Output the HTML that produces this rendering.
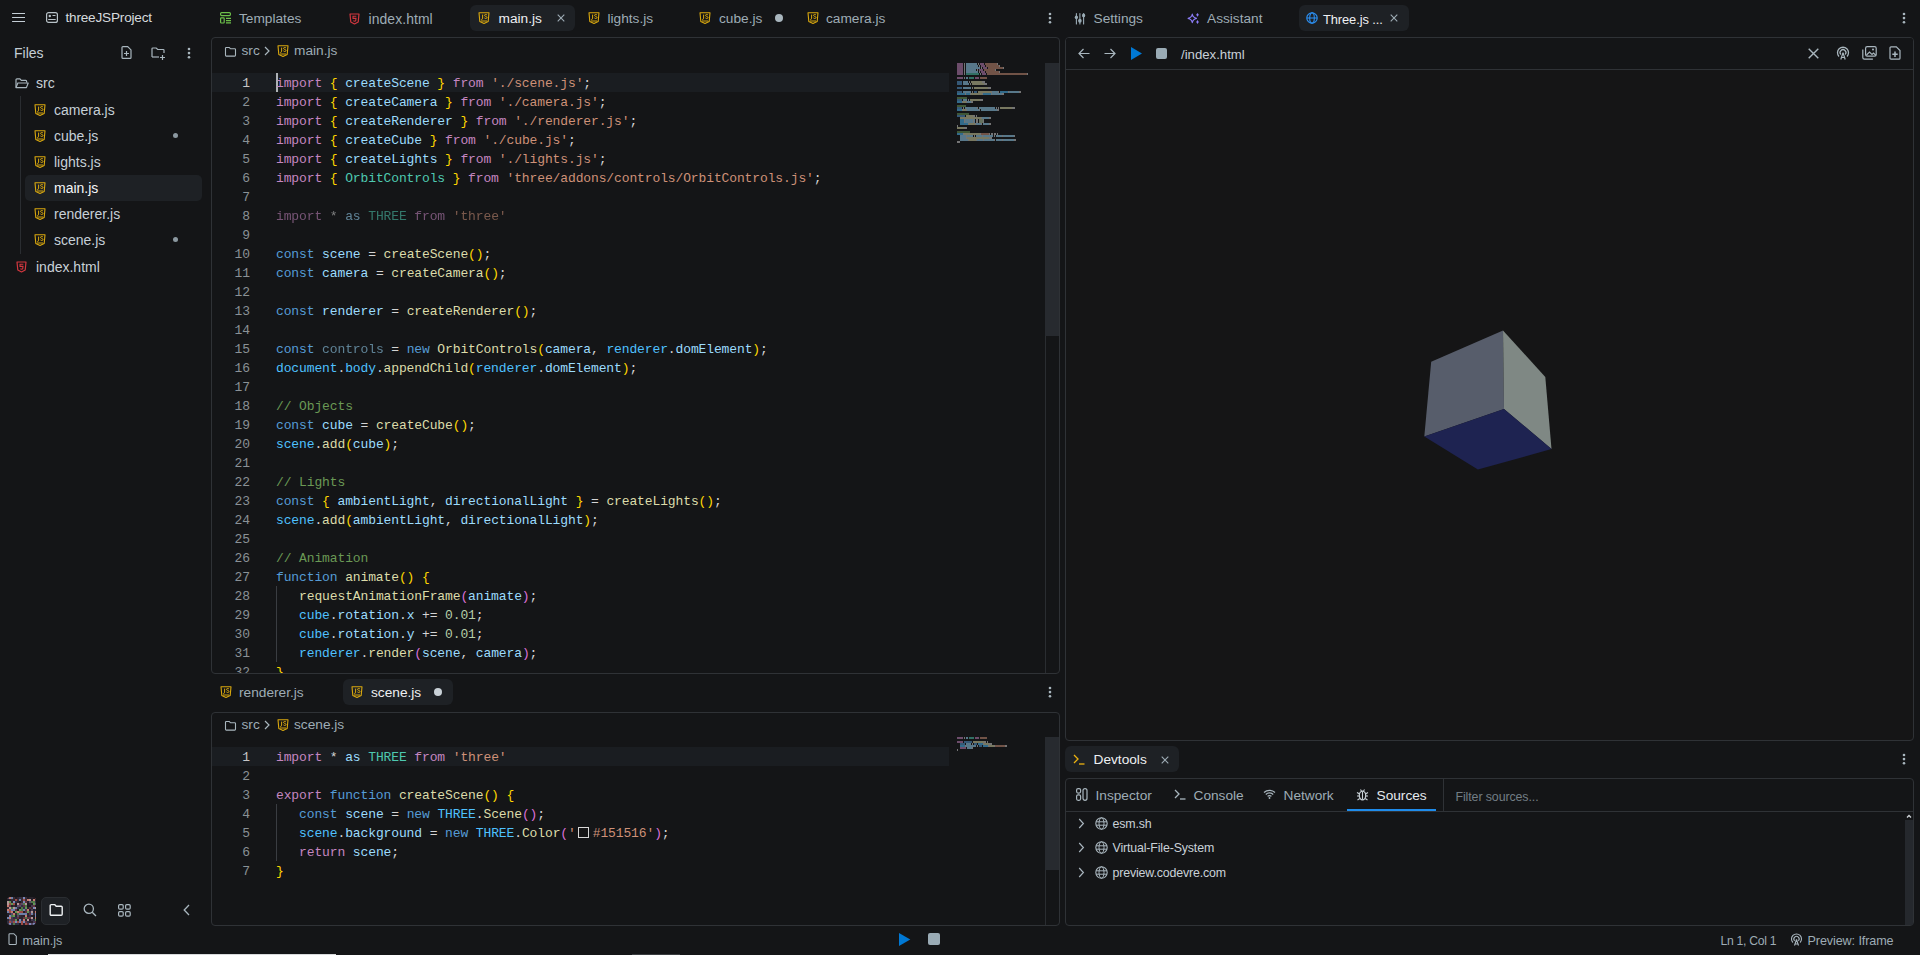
<!DOCTYPE html><html><head><meta charset="utf-8"><style>
html,body{margin:0;padding:0;width:1920px;height:955px;overflow:hidden;background:#141517;}
.t{position:absolute;white-space:pre;font-family:"Liberation Sans", sans-serif;}
.r{position:absolute;}
.code{font-family:"Liberation Mono", monospace;}
</style></head><body>
<svg class="r" style="left:12px;top:13px;" width="13" height="10" viewBox="0 0 13 10" fill="none"><path d="M0.5 0.5h12.5M0.5 4.5h12.5M0.5 8.5h12.5" stroke="#c4ced6" stroke-width="1.05" stroke-linecap="round"/></svg>
<svg class="r" style="left:46px;top:12px;" width="12" height="11" viewBox="0 0 12 11" fill="none"><rect x="0.6" y="0.6" width="10.8" height="9.8" rx="2" stroke="#b8c2c8" stroke-width="1.2"/><circle cx="3.8" cy="4" r="1.2" fill="#b8c2c8"/><path d="M2.2 7.5h7.5M6.5 3.5h3" stroke="#b8c2c8" stroke-width="1.1"/></svg>
<div class="t " style="left:65.5px;top:9.09px;font-size:13.6px;line-height:18px;color:#d6dadd;font-weight:500;letter-spacing:-0.2px;">threeJSProject</div>
<svg class="r" style="left:220px;top:12px;" width="11" height="12" viewBox="0 0 11 12" fill="none"><rect x="0.6" y="0.6" width="9.8" height="3" rx="1" stroke="#6cc04a" stroke-width="1.2"/><rect x="0.6" y="5.8" width="3.6" height="5.2" rx=".8" stroke="#6cc04a" stroke-width="1.2"/><path d="M6 6.4h5M6 8.6h5M6 10.8h5" stroke="#6cc04a" stroke-width="1.2"/></svg>
<div class="t " style="left:239px;top:9.85px;font-size:13.7px;line-height:18px;color:#9eacb5;font-weight:400;letter-spacing:0px;">Templates</div>
<svg class="r" style="left:349px;top:13px;" width="11" height="12" viewBox="0 0 11 12" fill="none"><path d="M1 1h9l-0.8 8L5.5 11 1.8 9z" stroke="#d2373f" stroke-width="1.2" stroke-linejoin="round"/><path d="M7.3 3.2H4v2.2h3l-.3 2.4-1.2.4-1.2-.4" stroke="#d2373f" stroke-width="1.1"/></svg>
<div class="t " style="left:368.5px;top:9.78px;font-size:13.9px;line-height:18px;color:#9eacb5;font-weight:400;letter-spacing:0.1px;">index.html</div>
<div class="r" style="left:470px;top:5px;width:105px;height:26px;background:#1e2125;border-radius:6px;"></div>
<svg class="r" style="left:478px;top:12px;" width="12" height="12" viewBox="0 0 12 12" fill="none"><path d="M1 0.8h10l-0.8 8.6L6 11.4 1.8 9.4z" stroke="#d9a80f" stroke-width="1.1" stroke-linejoin="round"/><path d="M4.6 2.6v3.6c0 .9-.5 1.3-1.3 1.3M9 3c-.4-.4-.9-.5-1.4-.5-.6 0-1.1.4-1.1.9 0 1.2 2.5.8 2.5 2.1 0 .6-.5 1-1.2 1-.5 0-1-.2-1.4-.6M3 9h6" stroke="#d9a80f" stroke-width="1"/></svg>
<div class="t " style="left:498.5px;top:9.85px;font-size:13.7px;line-height:18px;color:#eef0f2;font-weight:400;letter-spacing:0px;">main.js</div>
<svg class="r" style="left:557px;top:14px;" width="8" height="8" viewBox="0 0 8 8" fill="none"><path d="M0.7 0.7L7.3 7.3M7.3 0.7L0.7 7.3" stroke="#9eacb5" stroke-width="1.1"/></svg>
<svg class="r" style="left:588px;top:12px;" width="12" height="12" viewBox="0 0 12 12" fill="none"><path d="M1 0.8h10l-0.8 8.6L6 11.4 1.8 9.4z" stroke="#d9a80f" stroke-width="1.1" stroke-linejoin="round"/><path d="M4.6 2.6v3.6c0 .9-.5 1.3-1.3 1.3M9 3c-.4-.4-.9-.5-1.4-.5-.6 0-1.1.4-1.1.9 0 1.2 2.5.8 2.5 2.1 0 .6-.5 1-1.2 1-.5 0-1-.2-1.4-.6M3 9h6" stroke="#d9a80f" stroke-width="1"/></svg>
<div class="t " style="left:607.5px;top:9.85px;font-size:13.7px;line-height:18px;color:#9eacb5;font-weight:400;letter-spacing:0px;">lights.js</div>
<svg class="r" style="left:699px;top:12px;" width="12" height="12" viewBox="0 0 12 12" fill="none"><path d="M1 0.8h10l-0.8 8.6L6 11.4 1.8 9.4z" stroke="#d9a80f" stroke-width="1.1" stroke-linejoin="round"/><path d="M4.6 2.6v3.6c0 .9-.5 1.3-1.3 1.3M9 3c-.4-.4-.9-.5-1.4-.5-.6 0-1.1.4-1.1.9 0 1.2 2.5.8 2.5 2.1 0 .6-.5 1-1.2 1-.5 0-1-.2-1.4-.6M3 9h6" stroke="#d9a80f" stroke-width="1"/></svg>
<div class="t " style="left:719px;top:9.85px;font-size:13.7px;line-height:18px;color:#9eacb5;font-weight:400;letter-spacing:0px;">cube.js</div>
<div class="r" style="left:775px;top:14px;width:8px;height:8px;background:#a9b6be;border-radius:4px;"></div>
<svg class="r" style="left:807px;top:12px;" width="12" height="12" viewBox="0 0 12 12" fill="none"><path d="M1 0.8h10l-0.8 8.6L6 11.4 1.8 9.4z" stroke="#d9a80f" stroke-width="1.1" stroke-linejoin="round"/><path d="M4.6 2.6v3.6c0 .9-.5 1.3-1.3 1.3M9 3c-.4-.4-.9-.5-1.4-.5-.6 0-1.1.4-1.1.9 0 1.2 2.5.8 2.5 2.1 0 .6-.5 1-1.2 1-.5 0-1-.2-1.4-.6M3 9h6" stroke="#d9a80f" stroke-width="1"/></svg>
<div class="t " style="left:826px;top:9.85px;font-size:13.7px;line-height:18px;color:#9eacb5;font-weight:400;letter-spacing:0px;">camera.js</div>
<svg class="r" style="left:1048px;top:11px;" width="4" height="14" viewBox="0 0 4 14" fill="none"><circle cx="2" cy="3" r="1.3" fill="#a9b6be"/><circle cx="2" cy="7.1" r="1.3" fill="#a9b6be"/><circle cx="2" cy="11.2" r="1.3" fill="#a9b6be"/></svg>
<svg class="r" style="left:1072px;top:10px;" width="16" height="16" viewBox="0 0 16 16" fill="none"><path d="M4.4 3.5v10.5M7.9 3.5v10.5M11.6 3.5v10.5" stroke="#9aabb5" stroke-width="1.1" stroke-linecap="round"/><ellipse cx="4.4" cy="7.3" rx="1.6" ry="1.9" fill="#9aabb5"/><ellipse cx="7.9" cy="10.8" rx="1.8" ry="2" fill="#9aabb5"/><ellipse cx="11.6" cy="5.4" rx="1.6" ry="1.9" fill="#9aabb5"/></svg>
<div class="t " style="left:1093.5px;top:9.85px;font-size:13.7px;line-height:18px;color:#9eacb5;font-weight:400;letter-spacing:0px;">Settings</div>
<svg class="r" style="left:1186px;top:10px;" width="16" height="16" viewBox="0 0 16 16" fill="none"><path d="M6.3 4.1Q6.9 7.6 10.5 8.4 6.9 9.2 6.3 12.7 5.7 9.2 2.1 8.4 5.7 7.6 6.3 4.1z" stroke="#8b7cf6" stroke-width="1.1" stroke-linejoin="round"/><path d="M11.5 2.9l1.3 1.9-1.3 1.9-1.3-1.9z" fill="#8b7cf6"/><path d="M11.5 10.1l1.3 1.9-1.3 1.9-1.3-1.9z" fill="#8b7cf6"/></svg>
<div class="t " style="left:1207px;top:9.85px;font-size:13.7px;line-height:18px;color:#9eacb5;font-weight:400;letter-spacing:0px;">Assistant</div>
<div class="r" style="left:1299px;top:5px;width:110px;height:26px;background:#1e2125;border-radius:6px;"></div>
<svg class="r" style="left:1306px;top:12px;" width="12" height="12" viewBox="0 0 12 12" fill="none"><circle cx="6" cy="6" r="5.2" stroke="#2b8ef0" stroke-width="1.2"/><ellipse cx="6" cy="6" rx="2.3" ry="5.2" stroke="#2b8ef0" stroke-width="1.1"/><path d="M1 6h10" stroke="#2b8ef0" stroke-width="1.1"/></svg>
<div class="t " style="left:1323px;top:10.63px;font-size:12.9px;line-height:17px;color:#eef0f2;font-weight:400;letter-spacing:-0.1px;">Three.js ...</div>
<svg class="r" style="left:1390px;top:14px;" width="8" height="8" viewBox="0 0 8 8" fill="none"><path d="M0.7 0.7L7.3 7.3M7.3 0.7L0.7 7.3" stroke="#9eacb5" stroke-width="1.1"/></svg>
<svg class="r" style="left:1902px;top:11px;" width="4" height="14" viewBox="0 0 4 14" fill="none"><circle cx="2" cy="3" r="1.3" fill="#a9b6be"/><circle cx="2" cy="7.1" r="1.3" fill="#a9b6be"/><circle cx="2" cy="11.2" r="1.3" fill="#a9b6be"/></svg>
<div class="t " style="left:14px;top:43.95px;font-size:14px;line-height:18px;color:#c4ced6;font-weight:400;letter-spacing:0px;">Files</div>
<svg class="r" style="left:120.5px;top:46px;" width="11" height="13" viewBox="0 0 11 13" fill="none"><path d="M1 1.5a.9.9 0 0 1 .9-.9h4.8l3.3 3.3v7.6a.9.9 0 0 1-.9.9H1.9a.9.9 0 0 1-.9-.9z" stroke="#a9b6be" stroke-width="1.2"/><path d="M5.5 5v5M3 7.5h5" stroke="#a9b6be" stroke-width="1.2"/></svg>
<svg class="r" style="left:151px;top:47px;" width="15" height="14" viewBox="0 0 15 14" fill="none"><path d="M1 10V1.8a.8.8 0 0 1 .8-.8h3.4l1.5 1.5h5.5a.8.8 0 0 1 .8.8V6" stroke="#a9b6be" stroke-width="1.2"/><path d="M1 10h7" stroke="#a9b6be" stroke-width="1.2"/><path d="M11.5 8v5M9 10.5h5" stroke="#a9b6be" stroke-width="1.2"/></svg>
<svg class="r" style="left:186.5px;top:45.5px;" width="4" height="14" viewBox="0 0 4 14" fill="none"><circle cx="2" cy="3" r="1.3" fill="#a9b6be"/><circle cx="2" cy="7.1" r="1.3" fill="#a9b6be"/><circle cx="2" cy="11.2" r="1.3" fill="#a9b6be"/></svg>
<svg class="r" style="left:15px;top:78px;" width="14" height="11" viewBox="0 0 14 11" fill="none"><path d="M1 9.6V1.8a.9.9 0 0 1 .9-.9h3l1.4 1.4h4.4a.9.9 0 0 1 .9.9V4.6" stroke="#a9b6be" stroke-width="1.2"/><path d="M1 9.6l1.8-4.6h10.4l-1.8 4.6z" stroke="#a9b6be" stroke-width="1.2" stroke-linejoin="round"/></svg>
<div class="t " style="left:36px;top:74.25px;font-size:14px;line-height:18px;color:#c9d1d7;font-weight:400;letter-spacing:0px;">src</div>
<div class="r" style="left:20px;top:96px;width:1px;height:158px;background:#2a2d31;border-radius:0px;"></div>
<div class="r" style="left:25px;top:175px;width:177px;height:26px;background:#1e2125;border-radius:5px;"></div>
<svg class="r" style="left:34px;top:104.2px;" width="12" height="12" viewBox="0 0 12 12" fill="none"><path d="M1 0.8h10l-0.8 8.6L6 11.4 1.8 9.4z" stroke="#d9a80f" stroke-width="1.1" stroke-linejoin="round"/><path d="M4.6 2.6v3.6c0 .9-.5 1.3-1.3 1.3M9 3c-.4-.4-.9-.5-1.4-.5-.6 0-1.1.4-1.1.9 0 1.2 2.5.8 2.5 2.1 0 .6-.5 1-1.2 1-.5 0-1-.2-1.4-.6M3 9h6" stroke="#d9a80f" stroke-width="1"/></svg>
<div class="t " style="left:54px;top:100.95px;font-size:14px;line-height:18px;color:#c6d0d7;font-weight:400;letter-spacing:0px;">camera.js</div>
<svg class="r" style="left:34px;top:130.2px;" width="12" height="12" viewBox="0 0 12 12" fill="none"><path d="M1 0.8h10l-0.8 8.6L6 11.4 1.8 9.4z" stroke="#d9a80f" stroke-width="1.1" stroke-linejoin="round"/><path d="M4.6 2.6v3.6c0 .9-.5 1.3-1.3 1.3M9 3c-.4-.4-.9-.5-1.4-.5-.6 0-1.1.4-1.1.9 0 1.2 2.5.8 2.5 2.1 0 .6-.5 1-1.2 1-.5 0-1-.2-1.4-.6M3 9h6" stroke="#d9a80f" stroke-width="1"/></svg>
<div class="t " style="left:54px;top:126.95px;font-size:14px;line-height:18px;color:#c6d0d7;font-weight:400;letter-spacing:0px;">cube.js</div>
<svg class="r" style="left:34px;top:156.2px;" width="12" height="12" viewBox="0 0 12 12" fill="none"><path d="M1 0.8h10l-0.8 8.6L6 11.4 1.8 9.4z" stroke="#d9a80f" stroke-width="1.1" stroke-linejoin="round"/><path d="M4.6 2.6v3.6c0 .9-.5 1.3-1.3 1.3M9 3c-.4-.4-.9-.5-1.4-.5-.6 0-1.1.4-1.1.9 0 1.2 2.5.8 2.5 2.1 0 .6-.5 1-1.2 1-.5 0-1-.2-1.4-.6M3 9h6" stroke="#d9a80f" stroke-width="1"/></svg>
<div class="t " style="left:54px;top:152.95px;font-size:14px;line-height:18px;color:#c6d0d7;font-weight:400;letter-spacing:0px;">lights.js</div>
<svg class="r" style="left:34px;top:182.2px;" width="12" height="12" viewBox="0 0 12 12" fill="none"><path d="M1 0.8h10l-0.8 8.6L6 11.4 1.8 9.4z" stroke="#d9a80f" stroke-width="1.1" stroke-linejoin="round"/><path d="M4.6 2.6v3.6c0 .9-.5 1.3-1.3 1.3M9 3c-.4-.4-.9-.5-1.4-.5-.6 0-1.1.4-1.1.9 0 1.2 2.5.8 2.5 2.1 0 .6-.5 1-1.2 1-.5 0-1-.2-1.4-.6M3 9h6" stroke="#d9a80f" stroke-width="1"/></svg>
<div class="t " style="left:54px;top:178.95px;font-size:14px;line-height:18px;color:#f4f6f8;font-weight:400;letter-spacing:0px;">main.js</div>
<svg class="r" style="left:34px;top:208.2px;" width="12" height="12" viewBox="0 0 12 12" fill="none"><path d="M1 0.8h10l-0.8 8.6L6 11.4 1.8 9.4z" stroke="#d9a80f" stroke-width="1.1" stroke-linejoin="round"/><path d="M4.6 2.6v3.6c0 .9-.5 1.3-1.3 1.3M9 3c-.4-.4-.9-.5-1.4-.5-.6 0-1.1.4-1.1.9 0 1.2 2.5.8 2.5 2.1 0 .6-.5 1-1.2 1-.5 0-1-.2-1.4-.6M3 9h6" stroke="#d9a80f" stroke-width="1"/></svg>
<div class="t " style="left:54px;top:204.95px;font-size:14px;line-height:18px;color:#c6d0d7;font-weight:400;letter-spacing:0px;">renderer.js</div>
<svg class="r" style="left:34px;top:234.2px;" width="12" height="12" viewBox="0 0 12 12" fill="none"><path d="M1 0.8h10l-0.8 8.6L6 11.4 1.8 9.4z" stroke="#d9a80f" stroke-width="1.1" stroke-linejoin="round"/><path d="M4.6 2.6v3.6c0 .9-.5 1.3-1.3 1.3M9 3c-.4-.4-.9-.5-1.4-.5-.6 0-1.1.4-1.1.9 0 1.2 2.5.8 2.5 2.1 0 .6-.5 1-1.2 1-.5 0-1-.2-1.4-.6M3 9h6" stroke="#d9a80f" stroke-width="1"/></svg>
<div class="t " style="left:54px;top:230.95px;font-size:14px;line-height:18px;color:#c6d0d7;font-weight:400;letter-spacing:0px;">scene.js</div>
<div class="r" style="left:173px;top:133px;width:5px;height:5px;background:#8b98a0;border-radius:3px;"></div>
<div class="r" style="left:173px;top:237px;width:5px;height:5px;background:#8b98a0;border-radius:3px;"></div>
<svg class="r" style="left:16px;top:261px;" width="11" height="12" viewBox="0 0 11 12" fill="none"><path d="M1 1h9l-0.8 8L5.5 11 1.8 9z" stroke="#d2373f" stroke-width="1.2" stroke-linejoin="round"/><path d="M7.3 3.2H4v2.2h3l-.3 2.4-1.2.4-1.2-.4" stroke="#d2373f" stroke-width="1.1"/></svg>
<div class="t " style="left:36px;top:257.95px;font-size:14px;line-height:18px;color:#c9d1d7;font-weight:400;letter-spacing:0px;">index.html</div>
<div class="r" style="left:7px;top:897px;width:29px;height:28px;border-radius:4px;overflow:hidden;background:#3a2a35"><div style="filter:blur(0.6px) saturate(0.85)"><svg style="display:block" shape-rendering="crispEdges" width="29" height="28" viewBox="0 0 29 28"><rect x="0" y="0" width="2.6" height="2.6" fill="#5a4a6a"/><rect x="2" y="0" width="2.6" height="2.6" fill="#d0786a"/><rect x="4" y="0" width="2.6" height="2.6" fill="#6a80b0"/><rect x="6" y="0" width="2.6" height="2.6" fill="#3a2a35"/><rect x="8" y="0" width="2.6" height="2.6" fill="#1e1a24"/><rect x="10" y="0" width="2.6" height="2.6" fill="#2e2430"/><rect x="12" y="0" width="2.6" height="2.6" fill="#303048"/><rect x="14" y="0" width="2.6" height="2.6" fill="#3a2a35"/><rect x="16" y="0" width="2.6" height="2.6" fill="#7888c0"/><rect x="18" y="0" width="2.6" height="2.6" fill="#3a2a35"/><rect x="20" y="0" width="2.6" height="2.6" fill="#1e1a24"/><rect x="22" y="0" width="2.6" height="2.6" fill="#26202a"/><rect x="24" y="0" width="2.6" height="2.6" fill="#26202a"/><rect x="26" y="0" width="2.6" height="2.6" fill="#1e1a24"/><rect x="28" y="0" width="2.6" height="2.6" fill="#a84840"/><rect x="0" y="2" width="2.6" height="2.6" fill="#1e1a24"/><rect x="2" y="2" width="2.6" height="2.6" fill="#26202a"/><rect x="4" y="2" width="2.6" height="2.6" fill="#3a2a35"/><rect x="6" y="2" width="2.6" height="2.6" fill="#2e2430"/><rect x="8" y="2" width="2.6" height="2.6" fill="#a84840"/><rect x="10" y="2" width="2.6" height="2.6" fill="#3a2a35"/><rect x="12" y="2" width="2.6" height="2.6" fill="#6a80b0"/><rect x="14" y="2" width="2.6" height="2.6" fill="#3a2a35"/><rect x="16" y="2" width="2.6" height="2.6" fill="#a84840"/><rect x="18" y="2" width="2.6" height="2.6" fill="#3a2a35"/><rect x="20" y="2" width="2.6" height="2.6" fill="#d0786a"/><rect x="22" y="2" width="2.6" height="2.6" fill="#b89898"/><rect x="24" y="2" width="2.6" height="2.6" fill="#26202a"/><rect x="26" y="2" width="2.6" height="2.6" fill="#d0786a"/><rect x="28" y="2" width="2.6" height="2.6" fill="#2e2430"/><rect x="0" y="4" width="2.6" height="2.6" fill="#b89898"/><rect x="2" y="4" width="2.6" height="2.6" fill="#5a9a4c"/><rect x="4" y="4" width="2.6" height="2.6" fill="#2e2430"/><rect x="6" y="4" width="2.6" height="2.6" fill="#7888c0"/><rect x="8" y="4" width="2.6" height="2.6" fill="#303048"/><rect x="10" y="4" width="2.6" height="2.6" fill="#2e2430"/><rect x="12" y="4" width="2.6" height="2.6" fill="#1e1a24"/><rect x="14" y="4" width="2.6" height="2.6" fill="#3a2a35"/><rect x="16" y="4" width="2.6" height="2.6" fill="#7888c0"/><rect x="18" y="4" width="2.6" height="2.6" fill="#6a3040"/><rect x="20" y="4" width="2.6" height="2.6" fill="#26202a"/><rect x="22" y="4" width="2.6" height="2.6" fill="#5a4a6a"/><rect x="24" y="4" width="2.6" height="2.6" fill="#4a7a40"/><rect x="26" y="4" width="2.6" height="2.6" fill="#4a7a40"/><rect x="28" y="4" width="2.6" height="2.6" fill="#303048"/><rect x="0" y="6" width="2.6" height="2.6" fill="#b89898"/><rect x="2" y="6" width="2.6" height="2.6" fill="#a84840"/><rect x="4" y="6" width="2.6" height="2.6" fill="#5a9a4c"/><rect x="6" y="6" width="2.6" height="2.6" fill="#a84840"/><rect x="8" y="6" width="2.6" height="2.6" fill="#1e1a24"/><rect x="10" y="6" width="2.6" height="2.6" fill="#b89898"/><rect x="12" y="6" width="2.6" height="2.6" fill="#6a3040"/><rect x="14" y="6" width="2.6" height="2.6" fill="#5a4a6a"/><rect x="16" y="6" width="2.6" height="2.6" fill="#4a7a40"/><rect x="18" y="6" width="2.6" height="2.6" fill="#b89898"/><rect x="20" y="6" width="2.6" height="2.6" fill="#1e1a24"/><rect x="22" y="6" width="2.6" height="2.6" fill="#2e2430"/><rect x="24" y="6" width="2.6" height="2.6" fill="#26202a"/><rect x="26" y="6" width="2.6" height="2.6" fill="#5a9a4c"/><rect x="28" y="6" width="2.6" height="2.6" fill="#5a4a6a"/><rect x="0" y="8" width="2.6" height="2.6" fill="#d0786a"/><rect x="2" y="8" width="2.6" height="2.6" fill="#6a3040"/><rect x="4" y="8" width="2.6" height="2.6" fill="#26202a"/><rect x="6" y="8" width="2.6" height="2.6" fill="#3a2a35"/><rect x="8" y="8" width="2.6" height="2.6" fill="#1e1a24"/><rect x="10" y="8" width="2.6" height="2.6" fill="#5a4a6a"/><rect x="12" y="8" width="2.6" height="2.6" fill="#5a4a6a"/><rect x="14" y="8" width="2.6" height="2.6" fill="#303048"/><rect x="16" y="8" width="2.6" height="2.6" fill="#6a3040"/><rect x="18" y="8" width="2.6" height="2.6" fill="#4a7a40"/><rect x="20" y="8" width="2.6" height="2.6" fill="#1e1a24"/><rect x="22" y="8" width="2.6" height="2.6" fill="#1e1a24"/><rect x="24" y="8" width="2.6" height="2.6" fill="#4a3a55"/><rect x="26" y="8" width="2.6" height="2.6" fill="#6a3040"/><rect x="28" y="8" width="2.6" height="2.6" fill="#1e1a24"/><rect x="0" y="10" width="2.6" height="2.6" fill="#3a2a35"/><rect x="2" y="10" width="2.6" height="2.6" fill="#b89898"/><rect x="4" y="10" width="2.6" height="2.6" fill="#4a7a40"/><rect x="6" y="10" width="2.6" height="2.6" fill="#b89898"/><rect x="8" y="10" width="2.6" height="2.6" fill="#6a80b0"/><rect x="10" y="10" width="2.6" height="2.6" fill="#303048"/><rect x="12" y="10" width="2.6" height="2.6" fill="#2a1f2a"/><rect x="14" y="10" width="2.6" height="2.6" fill="#4a7a40"/><rect x="16" y="10" width="2.6" height="2.6" fill="#303048"/><rect x="18" y="10" width="2.6" height="2.6" fill="#5a9a4c"/><rect x="20" y="10" width="2.6" height="2.6" fill="#2e2430"/><rect x="22" y="10" width="2.6" height="2.6" fill="#6a3040"/><rect x="24" y="10" width="2.6" height="2.6" fill="#3a2a35"/><rect x="26" y="10" width="2.6" height="2.6" fill="#7888c0"/><rect x="28" y="10" width="2.6" height="2.6" fill="#b89898"/><rect x="0" y="12" width="2.6" height="2.6" fill="#d0786a"/><rect x="2" y="12" width="2.6" height="2.6" fill="#a84840"/><rect x="4" y="12" width="2.6" height="2.6" fill="#6a80b0"/><rect x="6" y="12" width="2.6" height="2.6" fill="#6a80b0"/><rect x="8" y="12" width="2.6" height="2.6" fill="#6a3040"/><rect x="10" y="12" width="2.6" height="2.6" fill="#1e1a24"/><rect x="12" y="12" width="2.6" height="2.6" fill="#5a9a4c"/><rect x="14" y="12" width="2.6" height="2.6" fill="#4a7a40"/><rect x="16" y="12" width="2.6" height="2.6" fill="#6a80b0"/><rect x="18" y="12" width="2.6" height="2.6" fill="#4a3a55"/><rect x="20" y="12" width="2.6" height="2.6" fill="#d0786a"/><rect x="22" y="12" width="2.6" height="2.6" fill="#26202a"/><rect x="24" y="12" width="2.6" height="2.6" fill="#4a3a55"/><rect x="26" y="12" width="2.6" height="2.6" fill="#26202a"/><rect x="28" y="12" width="2.6" height="2.6" fill="#303048"/><rect x="0" y="14" width="2.6" height="2.6" fill="#6a80b0"/><rect x="2" y="14" width="2.6" height="2.6" fill="#a84840"/><rect x="4" y="14" width="2.6" height="2.6" fill="#d0786a"/><rect x="6" y="14" width="2.6" height="2.6" fill="#1e1a24"/><rect x="8" y="14" width="2.6" height="2.6" fill="#5a9a4c"/><rect x="10" y="14" width="2.6" height="2.6" fill="#d0786a"/><rect x="12" y="14" width="2.6" height="2.6" fill="#a84840"/><rect x="14" y="14" width="2.6" height="2.6" fill="#a84840"/><rect x="16" y="14" width="2.6" height="2.6" fill="#2a1f2a"/><rect x="18" y="14" width="2.6" height="2.6" fill="#6a3040"/><rect x="20" y="14" width="2.6" height="2.6" fill="#5a9a4c"/><rect x="22" y="14" width="2.6" height="2.6" fill="#4a3a55"/><rect x="24" y="14" width="2.6" height="2.6" fill="#b89898"/><rect x="26" y="14" width="2.6" height="2.6" fill="#2a1f2a"/><rect x="28" y="14" width="2.6" height="2.6" fill="#d0786a"/><rect x="0" y="16" width="2.6" height="2.6" fill="#26202a"/><rect x="2" y="16" width="2.6" height="2.6" fill="#303048"/><rect x="4" y="16" width="2.6" height="2.6" fill="#5a4a6a"/><rect x="6" y="16" width="2.6" height="2.6" fill="#d0786a"/><rect x="8" y="16" width="2.6" height="2.6" fill="#3a2a35"/><rect x="10" y="16" width="2.6" height="2.6" fill="#4a7a40"/><rect x="12" y="16" width="2.6" height="2.6" fill="#6a80b0"/><rect x="14" y="16" width="2.6" height="2.6" fill="#6a80b0"/><rect x="16" y="16" width="2.6" height="2.6" fill="#6a80b0"/><rect x="18" y="16" width="2.6" height="2.6" fill="#6a80b0"/><rect x="20" y="16" width="2.6" height="2.6" fill="#2e2430"/><rect x="22" y="16" width="2.6" height="2.6" fill="#6a3040"/><rect x="24" y="16" width="2.6" height="2.6" fill="#6a80b0"/><rect x="26" y="16" width="2.6" height="2.6" fill="#3a2a35"/><rect x="28" y="16" width="2.6" height="2.6" fill="#7888c0"/><rect x="0" y="18" width="2.6" height="2.6" fill="#1e1a24"/><rect x="2" y="18" width="2.6" height="2.6" fill="#7888c0"/><rect x="4" y="18" width="2.6" height="2.6" fill="#4a7a40"/><rect x="6" y="18" width="2.6" height="2.6" fill="#5a9a4c"/><rect x="8" y="18" width="2.6" height="2.6" fill="#2e2430"/><rect x="10" y="18" width="2.6" height="2.6" fill="#5a4a6a"/><rect x="12" y="18" width="2.6" height="2.6" fill="#3a2a35"/><rect x="14" y="18" width="2.6" height="2.6" fill="#2e2430"/><rect x="16" y="18" width="2.6" height="2.6" fill="#2a1f2a"/><rect x="18" y="18" width="2.6" height="2.6" fill="#d0786a"/><rect x="20" y="18" width="2.6" height="2.6" fill="#2e2430"/><rect x="22" y="18" width="2.6" height="2.6" fill="#303048"/><rect x="24" y="18" width="2.6" height="2.6" fill="#2a1f2a"/><rect x="26" y="18" width="2.6" height="2.6" fill="#1e1a24"/><rect x="28" y="18" width="2.6" height="2.6" fill="#7888c0"/><rect x="0" y="20" width="2.6" height="2.6" fill="#6a80b0"/><rect x="2" y="20" width="2.6" height="2.6" fill="#d0786a"/><rect x="4" y="20" width="2.6" height="2.6" fill="#4a3a55"/><rect x="6" y="20" width="2.6" height="2.6" fill="#303048"/><rect x="8" y="20" width="2.6" height="2.6" fill="#303048"/><rect x="10" y="20" width="2.6" height="2.6" fill="#6a3040"/><rect x="12" y="20" width="2.6" height="2.6" fill="#2e2430"/><rect x="14" y="20" width="2.6" height="2.6" fill="#2e2430"/><rect x="16" y="20" width="2.6" height="2.6" fill="#6a3040"/><rect x="18" y="20" width="2.6" height="2.6" fill="#4a7a40"/><rect x="20" y="20" width="2.6" height="2.6" fill="#6a3040"/><rect x="22" y="20" width="2.6" height="2.6" fill="#6a3040"/><rect x="24" y="20" width="2.6" height="2.6" fill="#b89898"/><rect x="26" y="20" width="2.6" height="2.6" fill="#1e1a24"/><rect x="28" y="20" width="2.6" height="2.6" fill="#d0786a"/><rect x="0" y="22" width="2.6" height="2.6" fill="#2e2430"/><rect x="2" y="22" width="2.6" height="2.6" fill="#5a4a6a"/><rect x="4" y="22" width="2.6" height="2.6" fill="#4a3a55"/><rect x="6" y="22" width="2.6" height="2.6" fill="#6a3040"/><rect x="8" y="22" width="2.6" height="2.6" fill="#5a9a4c"/><rect x="10" y="22" width="2.6" height="2.6" fill="#2a1f2a"/><rect x="12" y="22" width="2.6" height="2.6" fill="#7888c0"/><rect x="14" y="22" width="2.6" height="2.6" fill="#303048"/><rect x="16" y="22" width="2.6" height="2.6" fill="#d0786a"/><rect x="18" y="22" width="2.6" height="2.6" fill="#2a1f2a"/><rect x="20" y="22" width="2.6" height="2.6" fill="#b89898"/><rect x="22" y="22" width="2.6" height="2.6" fill="#1e1a24"/><rect x="24" y="22" width="2.6" height="2.6" fill="#4a3a55"/><rect x="26" y="22" width="2.6" height="2.6" fill="#303048"/><rect x="28" y="22" width="2.6" height="2.6" fill="#5a9a4c"/><rect x="0" y="24" width="2.6" height="2.6" fill="#303048"/><rect x="2" y="24" width="2.6" height="2.6" fill="#a84840"/><rect x="4" y="24" width="2.6" height="2.6" fill="#5a4a6a"/><rect x="6" y="24" width="2.6" height="2.6" fill="#a84840"/><rect x="8" y="24" width="2.6" height="2.6" fill="#7888c0"/><rect x="10" y="24" width="2.6" height="2.6" fill="#a84840"/><rect x="12" y="24" width="2.6" height="2.6" fill="#6a80b0"/><rect x="14" y="24" width="2.6" height="2.6" fill="#a84840"/><rect x="16" y="24" width="2.6" height="2.6" fill="#7888c0"/><rect x="18" y="24" width="2.6" height="2.6" fill="#6a3040"/><rect x="20" y="24" width="2.6" height="2.6" fill="#303048"/><rect x="22" y="24" width="2.6" height="2.6" fill="#2a1f2a"/><rect x="24" y="24" width="2.6" height="2.6" fill="#2a1f2a"/><rect x="26" y="24" width="2.6" height="2.6" fill="#4a3a55"/><rect x="28" y="24" width="2.6" height="2.6" fill="#6a3040"/><rect x="0" y="26" width="2.6" height="2.6" fill="#4a3a55"/><rect x="2" y="26" width="2.6" height="2.6" fill="#7888c0"/><rect x="4" y="26" width="2.6" height="2.6" fill="#303048"/><rect x="6" y="26" width="2.6" height="2.6" fill="#4a7a40"/><rect x="8" y="26" width="2.6" height="2.6" fill="#303048"/><rect x="10" y="26" width="2.6" height="2.6" fill="#303048"/><rect x="12" y="26" width="2.6" height="2.6" fill="#1e1a24"/><rect x="14" y="26" width="2.6" height="2.6" fill="#a84840"/><rect x="16" y="26" width="2.6" height="2.6" fill="#2e2430"/><rect x="18" y="26" width="2.6" height="2.6" fill="#a84840"/><rect x="20" y="26" width="2.6" height="2.6" fill="#6a3040"/><rect x="22" y="26" width="2.6" height="2.6" fill="#7888c0"/><rect x="24" y="26" width="2.6" height="2.6" fill="#5a4a6a"/><rect x="26" y="26" width="2.6" height="2.6" fill="#7888c0"/><rect x="28" y="26" width="2.6" height="2.6" fill="#6a3040"/></svg></div></div>
<div class="r" style="left:41px;top:897px;width:29px;height:28px;background:#1e2125;border-radius:5px;box-sizing:border-box;border:1px solid #2a2d31"></div>
<svg class="r" style="left:49px;top:903px;" width="15" height="14" viewBox="0 0 15 14" fill="none"><path d="M1.2 11.3V2.6a1 1 0 0 1 1-1h3.4l1.6 1.7h5a1 1 0 0 1 1 1v7a1 1 0 0 1-1 1H2.2a1 1 0 0 1-1-1z" stroke="#eef1f3" stroke-width="1.4" stroke-linejoin="round"/></svg>
<svg class="r" style="left:83px;top:903px;" width="14" height="14" viewBox="0 0 14 14" fill="none"><circle cx="5.8" cy="5.8" r="4.6" stroke="#a9b6be" stroke-width="1.3"/><path d="M9.2 9.2L13 13" stroke="#a9b6be" stroke-width="1.3"/></svg>
<svg class="r" style="left:118px;top:904px;" width="13" height="13" viewBox="0 0 13 13" fill="none"><rect x="0.6" y="0.6" width="4.6" height="4.6" rx="1.2" stroke="#a9b6be" stroke-width="1.2"/><rect x="7.6" y="0.6" width="4.6" height="4.6" rx="1.2" stroke="#a9b6be" stroke-width="1.2"/><rect x="0.6" y="7.6" width="4.6" height="4.6" rx="1.2" stroke="#a9b6be" stroke-width="1.2"/><rect x="7.6" y="7.6" width="4.6" height="4.6" rx="1.2" stroke="#a9b6be" stroke-width="1.2"/></svg>
<svg class="r" style="left:183px;top:904px;" width="7" height="12" viewBox="0 0 7 12" fill="none"><path d="M6 1L1.2 6 6 11" stroke="#a9b6be" stroke-width="1.3"/></svg>
<svg class="r" style="left:8px;top:933px;" width="9" height="12" viewBox="0 0 9 12" fill="none"><path d="M1 1.5a.8.8 0 0 1 .8-.8h4l2.5 2.5v7.5a.8.8 0 0 1-.8.8H1.8a.8.8 0 0 1-.8-.8z" stroke="#a9b6be" stroke-width="1.1"/></svg>
<div class="t " style="left:22.5px;top:932.63px;font-size:12.6px;line-height:16px;color:#9eacb5;font-weight:400;letter-spacing:0px;">main.js</div>
<svg class="r" style="left:899px;top:933px;" width="12" height="13" viewBox="0 0 12 13" fill="none"><path d="M0 0L11.3 6.5 0 13z" fill="#0078d4"/></svg>
<div class="r" style="left:928px;top:933px;width:12px;height:12px;background:#9aabb5;border-radius:2px;"></div>
<div class="t " style="left:1720.5px;top:932.77px;font-size:12.2px;line-height:16px;color:#9eacb5;font-weight:400;letter-spacing:-0.3px;">Ln 1, Col 1</div>
<svg class="r" style="left:1790px;top:933px;" width="13" height="13" viewBox="0 0 13 13" fill="none"><path d="M3 9.5a5 5 0 1 1 7 0" stroke="#a9b6be" stroke-width="1.1"/><path d="M4.6 7.8a2.6 2.6 0 1 1 3.8 0" stroke="#a9b6be" stroke-width="1.1"/><path d="M6.5 6.5L4.5 12.5M6.5 6.5l2 6M5 11h3" stroke="#a9b6be" stroke-width="1.1"/></svg>
<div class="t " style="left:1807.5px;top:932.63px;font-size:12.6px;line-height:16px;color:#9eacb5;font-weight:400;letter-spacing:-0.1px;">Preview: Iframe</div>
<div class="r" style="left:48px;top:954px;width:288px;height:1px;background:#d8dadc;border-radius:0px;"></div>
<div class="r" style="left:632px;top:954px;width:48px;height:1px;background:#3a3d40;border-radius:0px;"></div>
<div class="r" style="left:211px;top:37px;width:849px;height:637px;box-sizing:border-box;border:1px solid #2f3236;border-radius:4px;overflow:hidden">
<div class="r" style="left:-212px;top:-38px;width:1920px;height:955px">
<svg class="r" style="left:224px;top:46px;" width="13" height="11" viewBox="0 0 13 11" fill="none"><path d="M1.5 9.3V2.3a.8.8 0 0 1 .8-.8h3l1.3 1.3h4.1a.8.8 0 0 1 .8.8v5.7a.8.8 0 0 1-.8.8H2.3a.8.8 0 0 1-.8-.8z" stroke="#a9b6be" stroke-width="1.1"/></svg>
<div class="t " style="left:241.5px;top:41.85px;font-size:13.7px;line-height:18px;color:#9eacb5;font-weight:400;letter-spacing:0px;">src</div>
<svg class="r" style="left:264px;top:46px;" width="6" height="10" viewBox="0 0 6 10" fill="none"><path d="M1 1l4 4-4 4" stroke="#a9b6be" stroke-width="1.2"/></svg>
<svg class="r" style="left:277px;top:45px;" width="12" height="12" viewBox="0 0 12 12" fill="none"><path d="M1 0.8h10l-0.8 8.6L6 11.4 1.8 9.4z" stroke="#d9a80f" stroke-width="1.1" stroke-linejoin="round"/><path d="M4.6 2.6v3.6c0 .9-.5 1.3-1.3 1.3M9 3c-.4-.4-.9-.5-1.4-.5-.6 0-1.1.4-1.1.9 0 1.2 2.5.8 2.5 2.1 0 .6-.5 1-1.2 1-.5 0-1-.2-1.4-.6M3 9h6" stroke="#d9a80f" stroke-width="1"/></svg>
<div class="t " style="left:294px;top:41.85px;font-size:13.7px;line-height:18px;color:#9eacb5;font-weight:400;letter-spacing:0px;">main.js</div>
<div class="r" style="left:212px;top:73px;width:737px;height:19px;background:#1a1d21;border-radius:0px;"></div>
<div class="r" style="left:276px;top:73px;width:2px;height:19px;background:#aeb2b6;border-radius:0px;"></div>
<div class="r" style="left:276px;top:586px;width:1px;height:76px;background:#3a3d42;border-radius:0px;"></div>
<div class="t code" style="left:200px;width:50px;text-align:right;top:73.64px;font-size:13px;line-height:19px;color:#c6c6c6">1</div>
<div class="t code" style="left:276px;top:73.64px;font-size:13px;line-height:19px;letter-spacing:-0.12px;"><span style="color:#C586C0">import</span><span style="color:#D4D4D4"> </span><span style="color:#FFD700">{</span><span style="color:#D4D4D4"> </span><span style="color:#9CDCFE">createScene</span><span style="color:#D4D4D4"> </span><span style="color:#FFD700">}</span><span style="color:#D4D4D4"> </span><span style="color:#C586C0">from</span><span style="color:#D4D4D4"> </span><span style="color:#CE9178">&#x27;./scene.js&#x27;</span><span style="color:#D4D4D4">;</span></div>
<div class="t code" style="left:200px;width:50px;text-align:right;top:92.64px;font-size:13px;line-height:19px;color:#8a9196">2</div>
<div class="t code" style="left:276px;top:92.64px;font-size:13px;line-height:19px;letter-spacing:-0.12px;"><span style="color:#C586C0">import</span><span style="color:#D4D4D4"> </span><span style="color:#FFD700">{</span><span style="color:#D4D4D4"> </span><span style="color:#9CDCFE">createCamera</span><span style="color:#D4D4D4"> </span><span style="color:#FFD700">}</span><span style="color:#D4D4D4"> </span><span style="color:#C586C0">from</span><span style="color:#D4D4D4"> </span><span style="color:#CE9178">&#x27;./camera.js&#x27;</span><span style="color:#D4D4D4">;</span></div>
<div class="t code" style="left:200px;width:50px;text-align:right;top:111.64px;font-size:13px;line-height:19px;color:#8a9196">3</div>
<div class="t code" style="left:276px;top:111.64px;font-size:13px;line-height:19px;letter-spacing:-0.12px;"><span style="color:#C586C0">import</span><span style="color:#D4D4D4"> </span><span style="color:#FFD700">{</span><span style="color:#D4D4D4"> </span><span style="color:#9CDCFE">createRenderer</span><span style="color:#D4D4D4"> </span><span style="color:#FFD700">}</span><span style="color:#D4D4D4"> </span><span style="color:#C586C0">from</span><span style="color:#D4D4D4"> </span><span style="color:#CE9178">&#x27;./renderer.js&#x27;</span><span style="color:#D4D4D4">;</span></div>
<div class="t code" style="left:200px;width:50px;text-align:right;top:130.64px;font-size:13px;line-height:19px;color:#8a9196">4</div>
<div class="t code" style="left:276px;top:130.64px;font-size:13px;line-height:19px;letter-spacing:-0.12px;"><span style="color:#C586C0">import</span><span style="color:#D4D4D4"> </span><span style="color:#FFD700">{</span><span style="color:#D4D4D4"> </span><span style="color:#9CDCFE">createCube</span><span style="color:#D4D4D4"> </span><span style="color:#FFD700">}</span><span style="color:#D4D4D4"> </span><span style="color:#C586C0">from</span><span style="color:#D4D4D4"> </span><span style="color:#CE9178">&#x27;./cube.js&#x27;</span><span style="color:#D4D4D4">;</span></div>
<div class="t code" style="left:200px;width:50px;text-align:right;top:149.64px;font-size:13px;line-height:19px;color:#8a9196">5</div>
<div class="t code" style="left:276px;top:149.64px;font-size:13px;line-height:19px;letter-spacing:-0.12px;"><span style="color:#C586C0">import</span><span style="color:#D4D4D4"> </span><span style="color:#FFD700">{</span><span style="color:#D4D4D4"> </span><span style="color:#9CDCFE">createLights</span><span style="color:#D4D4D4"> </span><span style="color:#FFD700">}</span><span style="color:#D4D4D4"> </span><span style="color:#C586C0">from</span><span style="color:#D4D4D4"> </span><span style="color:#CE9178">&#x27;./lights.js&#x27;</span><span style="color:#D4D4D4">;</span></div>
<div class="t code" style="left:200px;width:50px;text-align:right;top:168.64px;font-size:13px;line-height:19px;color:#8a9196">6</div>
<div class="t code" style="left:276px;top:168.64px;font-size:13px;line-height:19px;letter-spacing:-0.12px;"><span style="color:#C586C0">import</span><span style="color:#D4D4D4"> </span><span style="color:#FFD700">{</span><span style="color:#D4D4D4"> </span><span style="color:#4EC9B0">OrbitControls</span><span style="color:#D4D4D4"> </span><span style="color:#FFD700">}</span><span style="color:#D4D4D4"> </span><span style="color:#C586C0">from</span><span style="color:#D4D4D4"> </span><span style="color:#CE9178">&#x27;three/addons/controls/OrbitControls.js&#x27;</span><span style="color:#D4D4D4">;</span></div>
<div class="t code" style="left:200px;width:50px;text-align:right;top:187.64px;font-size:13px;line-height:19px;color:#8a9196">7</div>
<div class="t code" style="left:200px;width:50px;text-align:right;top:206.64px;font-size:13px;line-height:19px;color:#8a9196">8</div>
<div class="t code" style="left:276px;top:206.64px;font-size:13px;line-height:19px;letter-spacing:-0.12px;"><span style="color:#C586C0;opacity:.55">import</span><span style="color:#D4D4D4;opacity:.55"> </span><span style="color:#D4D4D4;opacity:.55">*</span><span style="color:#D4D4D4;opacity:.55"> </span><span style="color:#9CDCFE;opacity:.55">as</span><span style="color:#D4D4D4;opacity:.55"> </span><span style="color:#4EC9B0;opacity:.55">THREE</span><span style="color:#D4D4D4;opacity:.55"> </span><span style="color:#C586C0;opacity:.55">from</span><span style="color:#D4D4D4;opacity:.55"> </span><span style="color:#CE9178;opacity:.55">&#x27;three&#x27;</span></div>
<div class="t code" style="left:200px;width:50px;text-align:right;top:225.64px;font-size:13px;line-height:19px;color:#8a9196">9</div>
<div class="t code" style="left:200px;width:50px;text-align:right;top:244.64px;font-size:13px;line-height:19px;color:#8a9196">10</div>
<div class="t code" style="left:276px;top:244.64px;font-size:13px;line-height:19px;letter-spacing:-0.12px;"><span style="color:#569CD6">const</span><span style="color:#D4D4D4"> </span><span style="color:#9CDCFE">scene</span><span style="color:#D4D4D4"> </span><span style="color:#D4D4D4">=</span><span style="color:#D4D4D4"> </span><span style="color:#DCDCAA">createScene</span><span style="color:#FFD700">(</span><span style="color:#FFD700">)</span><span style="color:#D4D4D4">;</span></div>
<div class="t code" style="left:200px;width:50px;text-align:right;top:263.64px;font-size:13px;line-height:19px;color:#8a9196">11</div>
<div class="t code" style="left:276px;top:263.64px;font-size:13px;line-height:19px;letter-spacing:-0.12px;"><span style="color:#569CD6">const</span><span style="color:#D4D4D4"> </span><span style="color:#9CDCFE">camera</span><span style="color:#D4D4D4"> </span><span style="color:#D4D4D4">=</span><span style="color:#D4D4D4"> </span><span style="color:#DCDCAA">createCamera</span><span style="color:#FFD700">(</span><span style="color:#FFD700">)</span><span style="color:#D4D4D4">;</span></div>
<div class="t code" style="left:200px;width:50px;text-align:right;top:282.64px;font-size:13px;line-height:19px;color:#8a9196">12</div>
<div class="t code" style="left:200px;width:50px;text-align:right;top:301.64px;font-size:13px;line-height:19px;color:#8a9196">13</div>
<div class="t code" style="left:276px;top:301.64px;font-size:13px;line-height:19px;letter-spacing:-0.12px;"><span style="color:#569CD6">const</span><span style="color:#D4D4D4"> </span><span style="color:#9CDCFE">renderer</span><span style="color:#D4D4D4"> </span><span style="color:#D4D4D4">=</span><span style="color:#D4D4D4"> </span><span style="color:#DCDCAA">createRenderer</span><span style="color:#FFD700">(</span><span style="color:#FFD700">)</span><span style="color:#D4D4D4">;</span></div>
<div class="t code" style="left:200px;width:50px;text-align:right;top:320.64px;font-size:13px;line-height:19px;color:#8a9196">14</div>
<div class="t code" style="left:200px;width:50px;text-align:right;top:339.64px;font-size:13px;line-height:19px;color:#8a9196">15</div>
<div class="t code" style="left:276px;top:339.64px;font-size:13px;line-height:19px;letter-spacing:-0.12px;"><span style="color:#569CD6">const</span><span style="color:#D4D4D4"> </span><span style="color:#9CDCFE;opacity:.55">controls</span><span style="color:#D4D4D4"> </span><span style="color:#D4D4D4">=</span><span style="color:#D4D4D4"> </span><span style="color:#569CD6">new</span><span style="color:#D4D4D4"> </span><span style="color:#DCDCAA">OrbitControls</span><span style="color:#FFD700">(</span><span style="color:#9CDCFE">camera</span><span style="color:#D4D4D4">,</span><span style="color:#D4D4D4"> </span><span style="color:#4FC1FF">renderer</span><span style="color:#D4D4D4">.</span><span style="color:#9CDCFE">domElement</span><span style="color:#FFD700">)</span><span style="color:#D4D4D4">;</span></div>
<div class="t code" style="left:200px;width:50px;text-align:right;top:358.64px;font-size:13px;line-height:19px;color:#8a9196">16</div>
<div class="t code" style="left:276px;top:358.64px;font-size:13px;line-height:19px;letter-spacing:-0.12px;"><span style="color:#4FC1FF">document</span><span style="color:#D4D4D4">.</span><span style="color:#4FC1FF">body</span><span style="color:#D4D4D4">.</span><span style="color:#DCDCAA">appendChild</span><span style="color:#FFD700">(</span><span style="color:#4FC1FF">renderer</span><span style="color:#D4D4D4">.</span><span style="color:#9CDCFE">domElement</span><span style="color:#FFD700">)</span><span style="color:#D4D4D4">;</span></div>
<div class="t code" style="left:200px;width:50px;text-align:right;top:377.64px;font-size:13px;line-height:19px;color:#8a9196">17</div>
<div class="t code" style="left:200px;width:50px;text-align:right;top:396.64px;font-size:13px;line-height:19px;color:#8a9196">18</div>
<div class="t code" style="left:276px;top:396.64px;font-size:13px;line-height:19px;letter-spacing:-0.12px;"><span style="color:#6A9955">// Objects</span></div>
<div class="t code" style="left:200px;width:50px;text-align:right;top:415.64px;font-size:13px;line-height:19px;color:#8a9196">19</div>
<div class="t code" style="left:276px;top:415.64px;font-size:13px;line-height:19px;letter-spacing:-0.12px;"><span style="color:#569CD6">const</span><span style="color:#D4D4D4"> </span><span style="color:#9CDCFE">cube</span><span style="color:#D4D4D4"> </span><span style="color:#D4D4D4">=</span><span style="color:#D4D4D4"> </span><span style="color:#DCDCAA">createCube</span><span style="color:#FFD700">(</span><span style="color:#FFD700">)</span><span style="color:#D4D4D4">;</span></div>
<div class="t code" style="left:200px;width:50px;text-align:right;top:434.64px;font-size:13px;line-height:19px;color:#8a9196">20</div>
<div class="t code" style="left:276px;top:434.64px;font-size:13px;line-height:19px;letter-spacing:-0.12px;"><span style="color:#4FC1FF">scene</span><span style="color:#D4D4D4">.</span><span style="color:#DCDCAA">add</span><span style="color:#FFD700">(</span><span style="color:#9CDCFE">cube</span><span style="color:#FFD700">)</span><span style="color:#D4D4D4">;</span></div>
<div class="t code" style="left:200px;width:50px;text-align:right;top:453.64px;font-size:13px;line-height:19px;color:#8a9196">21</div>
<div class="t code" style="left:200px;width:50px;text-align:right;top:472.64px;font-size:13px;line-height:19px;color:#8a9196">22</div>
<div class="t code" style="left:276px;top:472.64px;font-size:13px;line-height:19px;letter-spacing:-0.12px;"><span style="color:#6A9955">// Lights</span></div>
<div class="t code" style="left:200px;width:50px;text-align:right;top:491.64px;font-size:13px;line-height:19px;color:#8a9196">23</div>
<div class="t code" style="left:276px;top:491.64px;font-size:13px;line-height:19px;letter-spacing:-0.12px;"><span style="color:#569CD6">const</span><span style="color:#D4D4D4"> </span><span style="color:#FFD700">{</span><span style="color:#D4D4D4"> </span><span style="color:#9CDCFE">ambientLight</span><span style="color:#D4D4D4">,</span><span style="color:#D4D4D4"> </span><span style="color:#9CDCFE">directionalLight</span><span style="color:#D4D4D4"> </span><span style="color:#FFD700">}</span><span style="color:#D4D4D4"> </span><span style="color:#D4D4D4">=</span><span style="color:#D4D4D4"> </span><span style="color:#DCDCAA">createLights</span><span style="color:#FFD700">(</span><span style="color:#FFD700">)</span><span style="color:#D4D4D4">;</span></div>
<div class="t code" style="left:200px;width:50px;text-align:right;top:510.64px;font-size:13px;line-height:19px;color:#8a9196">24</div>
<div class="t code" style="left:276px;top:510.64px;font-size:13px;line-height:19px;letter-spacing:-0.12px;"><span style="color:#4FC1FF">scene</span><span style="color:#D4D4D4">.</span><span style="color:#DCDCAA">add</span><span style="color:#FFD700">(</span><span style="color:#9CDCFE">ambientLight</span><span style="color:#D4D4D4">,</span><span style="color:#D4D4D4"> </span><span style="color:#9CDCFE">directionalLight</span><span style="color:#FFD700">)</span><span style="color:#D4D4D4">;</span></div>
<div class="t code" style="left:200px;width:50px;text-align:right;top:529.64px;font-size:13px;line-height:19px;color:#8a9196">25</div>
<div class="t code" style="left:200px;width:50px;text-align:right;top:548.64px;font-size:13px;line-height:19px;color:#8a9196">26</div>
<div class="t code" style="left:276px;top:548.64px;font-size:13px;line-height:19px;letter-spacing:-0.12px;"><span style="color:#6A9955">// Animation</span></div>
<div class="t code" style="left:200px;width:50px;text-align:right;top:567.64px;font-size:13px;line-height:19px;color:#8a9196">27</div>
<div class="t code" style="left:276px;top:567.64px;font-size:13px;line-height:19px;letter-spacing:-0.12px;"><span style="color:#569CD6">function</span><span style="color:#D4D4D4"> </span><span style="color:#DCDCAA">animate</span><span style="color:#FFD700">(</span><span style="color:#FFD700">)</span><span style="color:#D4D4D4"> </span><span style="color:#FFD700">{</span></div>
<div class="t code" style="left:200px;width:50px;text-align:right;top:586.64px;font-size:13px;line-height:19px;color:#8a9196">28</div>
<div class="t code" style="left:276px;top:586.64px;font-size:13px;line-height:19px;letter-spacing:-0.12px;"><span style="color:#D4D4D4"> </span><span style="color:#D4D4D4"> </span><span style="color:#D4D4D4"> </span><span style="color:#DCDCAA">requestAnimationFrame</span><span style="color:#DA70D6">(</span><span style="color:#9CDCFE">animate</span><span style="color:#DA70D6">)</span><span style="color:#D4D4D4">;</span></div>
<div class="t code" style="left:200px;width:50px;text-align:right;top:605.64px;font-size:13px;line-height:19px;color:#8a9196">29</div>
<div class="t code" style="left:276px;top:605.64px;font-size:13px;line-height:19px;letter-spacing:-0.12px;"><span style="color:#D4D4D4"> </span><span style="color:#D4D4D4"> </span><span style="color:#D4D4D4"> </span><span style="color:#4FC1FF">cube</span><span style="color:#D4D4D4">.</span><span style="color:#9CDCFE">rotation</span><span style="color:#D4D4D4">.</span><span style="color:#9CDCFE">x</span><span style="color:#D4D4D4"> </span><span style="color:#D4D4D4">+</span><span style="color:#D4D4D4">=</span><span style="color:#D4D4D4"> </span><span style="color:#B5CEA8">0.01</span><span style="color:#D4D4D4">;</span></div>
<div class="t code" style="left:200px;width:50px;text-align:right;top:624.64px;font-size:13px;line-height:19px;color:#8a9196">30</div>
<div class="t code" style="left:276px;top:624.64px;font-size:13px;line-height:19px;letter-spacing:-0.12px;"><span style="color:#D4D4D4"> </span><span style="color:#D4D4D4"> </span><span style="color:#D4D4D4"> </span><span style="color:#4FC1FF">cube</span><span style="color:#D4D4D4">.</span><span style="color:#9CDCFE">rotation</span><span style="color:#D4D4D4">.</span><span style="color:#9CDCFE">y</span><span style="color:#D4D4D4"> </span><span style="color:#D4D4D4">+</span><span style="color:#D4D4D4">=</span><span style="color:#D4D4D4"> </span><span style="color:#B5CEA8">0.01</span><span style="color:#D4D4D4">;</span></div>
<div class="t code" style="left:200px;width:50px;text-align:right;top:643.64px;font-size:13px;line-height:19px;color:#8a9196">31</div>
<div class="t code" style="left:276px;top:643.64px;font-size:13px;line-height:19px;letter-spacing:-0.12px;"><span style="color:#D4D4D4"> </span><span style="color:#D4D4D4"> </span><span style="color:#D4D4D4"> </span><span style="color:#4FC1FF">renderer</span><span style="color:#D4D4D4">.</span><span style="color:#DCDCAA">render</span><span style="color:#DA70D6">(</span><span style="color:#9CDCFE">scene</span><span style="color:#D4D4D4">,</span><span style="color:#D4D4D4"> </span><span style="color:#9CDCFE">camera</span><span style="color:#DA70D6">)</span><span style="color:#D4D4D4">;</span></div>
<div class="t code" style="left:200px;width:50px;text-align:right;top:662.64px;font-size:13px;line-height:19px;color:#8a9196">32</div>
<div class="t code" style="left:276px;top:662.64px;font-size:13px;line-height:19px;letter-spacing:-0.12px;"><span style="color:#FFD700">}</span></div>
<div class="r" style="left:957px;top:63px;width:6.0px;height:1.5px;background:#C586C0;border-radius:0px;opacity:.5"></div>
<div class="r" style="left:964.0px;top:63px;width:1.0px;height:1.5px;background:#D4D4D4;border-radius:0px;opacity:.5"></div>
<div class="r" style="left:966.0px;top:63px;width:11.0px;height:1.5px;background:#9CDCFE;border-radius:0px;opacity:.5"></div>
<div class="r" style="left:978.0px;top:63px;width:1.0px;height:1.5px;background:#D4D4D4;border-radius:0px;opacity:.5"></div>
<div class="r" style="left:980.0px;top:63px;width:4.0px;height:1.5px;background:#C586C0;border-radius:0px;opacity:.5"></div>
<div class="r" style="left:985.0px;top:63px;width:12.0px;height:1.5px;background:#CE9178;border-radius:0px;opacity:.5"></div>
<div class="r" style="left:997.0px;top:63px;width:1.0px;height:1.5px;background:#D4D4D4;border-radius:0px;opacity:.5"></div>
<div class="r" style="left:957px;top:65px;width:6.0px;height:1.5px;background:#C586C0;border-radius:0px;opacity:.5"></div>
<div class="r" style="left:964.0px;top:65px;width:1.0px;height:1.5px;background:#D4D4D4;border-radius:0px;opacity:.5"></div>
<div class="r" style="left:966.0px;top:65px;width:12.0px;height:1.5px;background:#9CDCFE;border-radius:0px;opacity:.5"></div>
<div class="r" style="left:979.0px;top:65px;width:1.0px;height:1.5px;background:#D4D4D4;border-radius:0px;opacity:.5"></div>
<div class="r" style="left:981.0px;top:65px;width:4.0px;height:1.5px;background:#C586C0;border-radius:0px;opacity:.5"></div>
<div class="r" style="left:986.0px;top:65px;width:13.0px;height:1.5px;background:#CE9178;border-radius:0px;opacity:.5"></div>
<div class="r" style="left:999.0px;top:65px;width:1.0px;height:1.5px;background:#D4D4D4;border-radius:0px;opacity:.5"></div>
<div class="r" style="left:957px;top:67px;width:6.0px;height:1.5px;background:#C586C0;border-radius:0px;opacity:.5"></div>
<div class="r" style="left:964.0px;top:67px;width:1.0px;height:1.5px;background:#D4D4D4;border-radius:0px;opacity:.5"></div>
<div class="r" style="left:966.0px;top:67px;width:14.0px;height:1.5px;background:#9CDCFE;border-radius:0px;opacity:.5"></div>
<div class="r" style="left:981.0px;top:67px;width:1.0px;height:1.5px;background:#D4D4D4;border-radius:0px;opacity:.5"></div>
<div class="r" style="left:983.0px;top:67px;width:4.0px;height:1.5px;background:#C586C0;border-radius:0px;opacity:.5"></div>
<div class="r" style="left:988.0px;top:67px;width:15.0px;height:1.5px;background:#CE9178;border-radius:0px;opacity:.5"></div>
<div class="r" style="left:1003.0px;top:67px;width:1.0px;height:1.5px;background:#D4D4D4;border-radius:0px;opacity:.5"></div>
<div class="r" style="left:957px;top:69px;width:6.0px;height:1.5px;background:#C586C0;border-radius:0px;opacity:.5"></div>
<div class="r" style="left:964.0px;top:69px;width:1.0px;height:1.5px;background:#D4D4D4;border-radius:0px;opacity:.5"></div>
<div class="r" style="left:966.0px;top:69px;width:10.0px;height:1.5px;background:#9CDCFE;border-radius:0px;opacity:.5"></div>
<div class="r" style="left:977.0px;top:69px;width:1.0px;height:1.5px;background:#D4D4D4;border-radius:0px;opacity:.5"></div>
<div class="r" style="left:979.0px;top:69px;width:4.0px;height:1.5px;background:#C586C0;border-radius:0px;opacity:.5"></div>
<div class="r" style="left:984.0px;top:69px;width:11.0px;height:1.5px;background:#CE9178;border-radius:0px;opacity:.5"></div>
<div class="r" style="left:995.0px;top:69px;width:1.0px;height:1.5px;background:#D4D4D4;border-radius:0px;opacity:.5"></div>
<div class="r" style="left:957px;top:71px;width:6.0px;height:1.5px;background:#C586C0;border-radius:0px;opacity:.5"></div>
<div class="r" style="left:964.0px;top:71px;width:1.0px;height:1.5px;background:#D4D4D4;border-radius:0px;opacity:.5"></div>
<div class="r" style="left:966.0px;top:71px;width:12.0px;height:1.5px;background:#9CDCFE;border-radius:0px;opacity:.5"></div>
<div class="r" style="left:979.0px;top:71px;width:1.0px;height:1.5px;background:#D4D4D4;border-radius:0px;opacity:.5"></div>
<div class="r" style="left:981.0px;top:71px;width:4.0px;height:1.5px;background:#C586C0;border-radius:0px;opacity:.5"></div>
<div class="r" style="left:986.0px;top:71px;width:13.0px;height:1.5px;background:#CE9178;border-radius:0px;opacity:.5"></div>
<div class="r" style="left:999.0px;top:71px;width:1.0px;height:1.5px;background:#D4D4D4;border-radius:0px;opacity:.5"></div>
<div class="r" style="left:957px;top:73px;width:6.0px;height:1.5px;background:#C586C0;border-radius:0px;opacity:.5"></div>
<div class="r" style="left:964.0px;top:73px;width:1.0px;height:1.5px;background:#D4D4D4;border-radius:0px;opacity:.5"></div>
<div class="r" style="left:966.0px;top:73px;width:13.0px;height:1.5px;background:#4EC9B0;border-radius:0px;opacity:.5"></div>
<div class="r" style="left:980.0px;top:73px;width:1.0px;height:1.5px;background:#D4D4D4;border-radius:0px;opacity:.5"></div>
<div class="r" style="left:982.0px;top:73px;width:4.0px;height:1.5px;background:#C586C0;border-radius:0px;opacity:.5"></div>
<div class="r" style="left:987.0px;top:73px;width:40.0px;height:1.5px;background:#CE9178;border-radius:0px;opacity:.5"></div>
<div class="r" style="left:1027.0px;top:73px;width:1.0px;height:1.5px;background:#D4D4D4;border-radius:0px;opacity:.5"></div>
<div class="r" style="left:957px;top:77px;width:6.0px;height:1.5px;background:#C586C0;border-radius:0px;opacity:.5"></div>
<div class="r" style="left:964.0px;top:77px;width:1.0px;height:1.5px;background:#D4D4D4;border-radius:0px;opacity:.5"></div>
<div class="r" style="left:966.0px;top:77px;width:2.0px;height:1.5px;background:#9CDCFE;border-radius:0px;opacity:.5"></div>
<div class="r" style="left:969.0px;top:77px;width:5.0px;height:1.5px;background:#4EC9B0;border-radius:0px;opacity:.5"></div>
<div class="r" style="left:975.0px;top:77px;width:4.0px;height:1.5px;background:#C586C0;border-radius:0px;opacity:.5"></div>
<div class="r" style="left:980.0px;top:77px;width:7.0px;height:1.5px;background:#CE9178;border-radius:0px;opacity:.5"></div>
<div class="r" style="left:957px;top:81px;width:5.0px;height:1.5px;background:#569CD6;border-radius:0px;opacity:.5"></div>
<div class="r" style="left:963.0px;top:81px;width:5.0px;height:1.5px;background:#9CDCFE;border-radius:0px;opacity:.5"></div>
<div class="r" style="left:969.0px;top:81px;width:1.0px;height:1.5px;background:#D4D4D4;border-radius:0px;opacity:.5"></div>
<div class="r" style="left:971.0px;top:81px;width:11.0px;height:1.5px;background:#DCDCAA;border-radius:0px;opacity:.5"></div>
<div class="r" style="left:982.0px;top:81px;width:1.0px;height:1.5px;background:#D4D4D4;border-radius:0px;opacity:.5"></div>
<div class="r" style="left:983.0px;top:81px;width:1.0px;height:1.5px;background:#D4D4D4;border-radius:0px;opacity:.5"></div>
<div class="r" style="left:984.0px;top:81px;width:1.0px;height:1.5px;background:#D4D4D4;border-radius:0px;opacity:.5"></div>
<div class="r" style="left:957px;top:83px;width:5.0px;height:1.5px;background:#569CD6;border-radius:0px;opacity:.5"></div>
<div class="r" style="left:963.0px;top:83px;width:6.0px;height:1.5px;background:#9CDCFE;border-radius:0px;opacity:.5"></div>
<div class="r" style="left:970.0px;top:83px;width:1.0px;height:1.5px;background:#D4D4D4;border-radius:0px;opacity:.5"></div>
<div class="r" style="left:972.0px;top:83px;width:12.0px;height:1.5px;background:#DCDCAA;border-radius:0px;opacity:.5"></div>
<div class="r" style="left:984.0px;top:83px;width:1.0px;height:1.5px;background:#D4D4D4;border-radius:0px;opacity:.5"></div>
<div class="r" style="left:985.0px;top:83px;width:1.0px;height:1.5px;background:#D4D4D4;border-radius:0px;opacity:.5"></div>
<div class="r" style="left:986.0px;top:83px;width:1.0px;height:1.5px;background:#D4D4D4;border-radius:0px;opacity:.5"></div>
<div class="r" style="left:957px;top:87px;width:5.0px;height:1.5px;background:#569CD6;border-radius:0px;opacity:.5"></div>
<div class="r" style="left:963.0px;top:87px;width:8.0px;height:1.5px;background:#9CDCFE;border-radius:0px;opacity:.5"></div>
<div class="r" style="left:972.0px;top:87px;width:1.0px;height:1.5px;background:#D4D4D4;border-radius:0px;opacity:.5"></div>
<div class="r" style="left:974.0px;top:87px;width:14.0px;height:1.5px;background:#DCDCAA;border-radius:0px;opacity:.5"></div>
<div class="r" style="left:988.0px;top:87px;width:1.0px;height:1.5px;background:#D4D4D4;border-radius:0px;opacity:.5"></div>
<div class="r" style="left:989.0px;top:87px;width:1.0px;height:1.5px;background:#D4D4D4;border-radius:0px;opacity:.5"></div>
<div class="r" style="left:990.0px;top:87px;width:1.0px;height:1.5px;background:#D4D4D4;border-radius:0px;opacity:.5"></div>
<div class="r" style="left:957px;top:91px;width:5.0px;height:1.5px;background:#569CD6;border-radius:0px;opacity:.5"></div>
<div class="r" style="left:963.0px;top:91px;width:8.0px;height:1.5px;background:#9CDCFE;border-radius:0px;opacity:.5"></div>
<div class="r" style="left:972.0px;top:91px;width:1.0px;height:1.5px;background:#D4D4D4;border-radius:0px;opacity:.5"></div>
<div class="r" style="left:974.0px;top:91px;width:3.0px;height:1.5px;background:#569CD6;border-radius:0px;opacity:.5"></div>
<div class="r" style="left:978.0px;top:91px;width:13.0px;height:1.5px;background:#DCDCAA;border-radius:0px;opacity:.5"></div>
<div class="r" style="left:991.0px;top:91px;width:1.0px;height:1.5px;background:#D4D4D4;border-radius:0px;opacity:.5"></div>
<div class="r" style="left:992.0px;top:91px;width:6.0px;height:1.5px;background:#9CDCFE;border-radius:0px;opacity:.5"></div>
<div class="r" style="left:998.0px;top:91px;width:1.0px;height:1.5px;background:#D4D4D4;border-radius:0px;opacity:.5"></div>
<div class="r" style="left:1000.0px;top:91px;width:8.0px;height:1.5px;background:#4FC1FF;border-radius:0px;opacity:.5"></div>
<div class="r" style="left:1008.0px;top:91px;width:1.0px;height:1.5px;background:#D4D4D4;border-radius:0px;opacity:.5"></div>
<div class="r" style="left:1009.0px;top:91px;width:10.0px;height:1.5px;background:#9CDCFE;border-radius:0px;opacity:.5"></div>
<div class="r" style="left:1019.0px;top:91px;width:1.0px;height:1.5px;background:#D4D4D4;border-radius:0px;opacity:.5"></div>
<div class="r" style="left:1020.0px;top:91px;width:1.0px;height:1.5px;background:#D4D4D4;border-radius:0px;opacity:.5"></div>
<div class="r" style="left:957px;top:93px;width:8.0px;height:1.5px;background:#4FC1FF;border-radius:0px;opacity:.5"></div>
<div class="r" style="left:965.0px;top:93px;width:1.0px;height:1.5px;background:#D4D4D4;border-radius:0px;opacity:.5"></div>
<div class="r" style="left:966.0px;top:93px;width:4.0px;height:1.5px;background:#4FC1FF;border-radius:0px;opacity:.5"></div>
<div class="r" style="left:970.0px;top:93px;width:1.0px;height:1.5px;background:#D4D4D4;border-radius:0px;opacity:.5"></div>
<div class="r" style="left:971.0px;top:93px;width:11.0px;height:1.5px;background:#DCDCAA;border-radius:0px;opacity:.5"></div>
<div class="r" style="left:982.0px;top:93px;width:1.0px;height:1.5px;background:#D4D4D4;border-radius:0px;opacity:.5"></div>
<div class="r" style="left:983.0px;top:93px;width:8.0px;height:1.5px;background:#4FC1FF;border-radius:0px;opacity:.5"></div>
<div class="r" style="left:991.0px;top:93px;width:1.0px;height:1.5px;background:#D4D4D4;border-radius:0px;opacity:.5"></div>
<div class="r" style="left:992.0px;top:93px;width:10.0px;height:1.5px;background:#9CDCFE;border-radius:0px;opacity:.5"></div>
<div class="r" style="left:1002.0px;top:93px;width:1.0px;height:1.5px;background:#D4D4D4;border-radius:0px;opacity:.5"></div>
<div class="r" style="left:1003.0px;top:93px;width:1.0px;height:1.5px;background:#D4D4D4;border-radius:0px;opacity:.5"></div>
<div class="r" style="left:957px;top:97px;width:10.0px;height:1.5px;background:#6A9955;border-radius:0px;opacity:.5"></div>
<div class="r" style="left:957px;top:99px;width:5.0px;height:1.5px;background:#569CD6;border-radius:0px;opacity:.5"></div>
<div class="r" style="left:963.0px;top:99px;width:4.0px;height:1.5px;background:#9CDCFE;border-radius:0px;opacity:.5"></div>
<div class="r" style="left:968.0px;top:99px;width:1.0px;height:1.5px;background:#D4D4D4;border-radius:0px;opacity:.5"></div>
<div class="r" style="left:970.0px;top:99px;width:10.0px;height:1.5px;background:#DCDCAA;border-radius:0px;opacity:.5"></div>
<div class="r" style="left:980.0px;top:99px;width:1.0px;height:1.5px;background:#D4D4D4;border-radius:0px;opacity:.5"></div>
<div class="r" style="left:981.0px;top:99px;width:1.0px;height:1.5px;background:#D4D4D4;border-radius:0px;opacity:.5"></div>
<div class="r" style="left:982.0px;top:99px;width:1.0px;height:1.5px;background:#D4D4D4;border-radius:0px;opacity:.5"></div>
<div class="r" style="left:957px;top:101px;width:5.0px;height:1.5px;background:#4FC1FF;border-radius:0px;opacity:.5"></div>
<div class="r" style="left:962.0px;top:101px;width:1.0px;height:1.5px;background:#D4D4D4;border-radius:0px;opacity:.5"></div>
<div class="r" style="left:963.0px;top:101px;width:3.0px;height:1.5px;background:#DCDCAA;border-radius:0px;opacity:.5"></div>
<div class="r" style="left:966.0px;top:101px;width:1.0px;height:1.5px;background:#D4D4D4;border-radius:0px;opacity:.5"></div>
<div class="r" style="left:967.0px;top:101px;width:4.0px;height:1.5px;background:#9CDCFE;border-radius:0px;opacity:.5"></div>
<div class="r" style="left:971.0px;top:101px;width:1.0px;height:1.5px;background:#D4D4D4;border-radius:0px;opacity:.5"></div>
<div class="r" style="left:972.0px;top:101px;width:1.0px;height:1.5px;background:#D4D4D4;border-radius:0px;opacity:.5"></div>
<div class="r" style="left:957px;top:105px;width:9.0px;height:1.5px;background:#6A9955;border-radius:0px;opacity:.5"></div>
<div class="r" style="left:957px;top:107px;width:5.0px;height:1.5px;background:#569CD6;border-radius:0px;opacity:.5"></div>
<div class="r" style="left:963.0px;top:107px;width:1.0px;height:1.5px;background:#D4D4D4;border-radius:0px;opacity:.5"></div>
<div class="r" style="left:965.0px;top:107px;width:12.0px;height:1.5px;background:#9CDCFE;border-radius:0px;opacity:.5"></div>
<div class="r" style="left:977.0px;top:107px;width:1.0px;height:1.5px;background:#D4D4D4;border-radius:0px;opacity:.5"></div>
<div class="r" style="left:979.0px;top:107px;width:16.0px;height:1.5px;background:#9CDCFE;border-radius:0px;opacity:.5"></div>
<div class="r" style="left:996.0px;top:107px;width:1.0px;height:1.5px;background:#D4D4D4;border-radius:0px;opacity:.5"></div>
<div class="r" style="left:998.0px;top:107px;width:1.0px;height:1.5px;background:#D4D4D4;border-radius:0px;opacity:.5"></div>
<div class="r" style="left:1000.0px;top:107px;width:12.0px;height:1.5px;background:#DCDCAA;border-radius:0px;opacity:.5"></div>
<div class="r" style="left:1012.0px;top:107px;width:1.0px;height:1.5px;background:#D4D4D4;border-radius:0px;opacity:.5"></div>
<div class="r" style="left:1013.0px;top:107px;width:1.0px;height:1.5px;background:#D4D4D4;border-radius:0px;opacity:.5"></div>
<div class="r" style="left:1014.0px;top:107px;width:1.0px;height:1.5px;background:#D4D4D4;border-radius:0px;opacity:.5"></div>
<div class="r" style="left:957px;top:109px;width:5.0px;height:1.5px;background:#4FC1FF;border-radius:0px;opacity:.5"></div>
<div class="r" style="left:962.0px;top:109px;width:1.0px;height:1.5px;background:#D4D4D4;border-radius:0px;opacity:.5"></div>
<div class="r" style="left:963.0px;top:109px;width:3.0px;height:1.5px;background:#DCDCAA;border-radius:0px;opacity:.5"></div>
<div class="r" style="left:966.0px;top:109px;width:1.0px;height:1.5px;background:#D4D4D4;border-radius:0px;opacity:.5"></div>
<div class="r" style="left:967.0px;top:109px;width:12.0px;height:1.5px;background:#9CDCFE;border-radius:0px;opacity:.5"></div>
<div class="r" style="left:979.0px;top:109px;width:1.0px;height:1.5px;background:#D4D4D4;border-radius:0px;opacity:.5"></div>
<div class="r" style="left:981.0px;top:109px;width:16.0px;height:1.5px;background:#9CDCFE;border-radius:0px;opacity:.5"></div>
<div class="r" style="left:997.0px;top:109px;width:1.0px;height:1.5px;background:#D4D4D4;border-radius:0px;opacity:.5"></div>
<div class="r" style="left:998.0px;top:109px;width:1.0px;height:1.5px;background:#D4D4D4;border-radius:0px;opacity:.5"></div>
<div class="r" style="left:957px;top:113px;width:12.0px;height:1.5px;background:#6A9955;border-radius:0px;opacity:.5"></div>
<div class="r" style="left:957px;top:115px;width:8.0px;height:1.5px;background:#569CD6;border-radius:0px;opacity:.5"></div>
<div class="r" style="left:966.0px;top:115px;width:7.0px;height:1.5px;background:#DCDCAA;border-radius:0px;opacity:.5"></div>
<div class="r" style="left:973.0px;top:115px;width:1.0px;height:1.5px;background:#D4D4D4;border-radius:0px;opacity:.5"></div>
<div class="r" style="left:974.0px;top:115px;width:1.0px;height:1.5px;background:#D4D4D4;border-radius:0px;opacity:.5"></div>
<div class="r" style="left:976.0px;top:115px;width:1.0px;height:1.5px;background:#D4D4D4;border-radius:0px;opacity:.5"></div>
<div class="r" style="left:960.0px;top:117px;width:21.0px;height:1.5px;background:#DCDCAA;border-radius:0px;opacity:.5"></div>
<div class="r" style="left:981.0px;top:117px;width:1.0px;height:1.5px;background:#D4D4D4;border-radius:0px;opacity:.5"></div>
<div class="r" style="left:982.0px;top:117px;width:7.0px;height:1.5px;background:#9CDCFE;border-radius:0px;opacity:.5"></div>
<div class="r" style="left:989.0px;top:117px;width:1.0px;height:1.5px;background:#D4D4D4;border-radius:0px;opacity:.5"></div>
<div class="r" style="left:990.0px;top:117px;width:1.0px;height:1.5px;background:#D4D4D4;border-radius:0px;opacity:.5"></div>
<div class="r" style="left:960.0px;top:119px;width:4.0px;height:1.5px;background:#4FC1FF;border-radius:0px;opacity:.5"></div>
<div class="r" style="left:964.0px;top:119px;width:1.0px;height:1.5px;background:#D4D4D4;border-radius:0px;opacity:.5"></div>
<div class="r" style="left:965.0px;top:119px;width:8.0px;height:1.5px;background:#9CDCFE;border-radius:0px;opacity:.5"></div>
<div class="r" style="left:973.0px;top:119px;width:1.0px;height:1.5px;background:#D4D4D4;border-radius:0px;opacity:.5"></div>
<div class="r" style="left:974.0px;top:119px;width:1.0px;height:1.5px;background:#9CDCFE;border-radius:0px;opacity:.5"></div>
<div class="r" style="left:976.0px;top:119px;width:1.0px;height:1.5px;background:#D4D4D4;border-radius:0px;opacity:.5"></div>
<div class="r" style="left:977.0px;top:119px;width:1.0px;height:1.5px;background:#D4D4D4;border-radius:0px;opacity:.5"></div>
<div class="r" style="left:979.0px;top:119px;width:4.0px;height:1.5px;background:#B5CEA8;border-radius:0px;opacity:.5"></div>
<div class="r" style="left:983.0px;top:119px;width:1.0px;height:1.5px;background:#D4D4D4;border-radius:0px;opacity:.5"></div>
<div class="r" style="left:960.0px;top:121px;width:4.0px;height:1.5px;background:#4FC1FF;border-radius:0px;opacity:.5"></div>
<div class="r" style="left:964.0px;top:121px;width:1.0px;height:1.5px;background:#D4D4D4;border-radius:0px;opacity:.5"></div>
<div class="r" style="left:965.0px;top:121px;width:8.0px;height:1.5px;background:#9CDCFE;border-radius:0px;opacity:.5"></div>
<div class="r" style="left:973.0px;top:121px;width:1.0px;height:1.5px;background:#D4D4D4;border-radius:0px;opacity:.5"></div>
<div class="r" style="left:974.0px;top:121px;width:1.0px;height:1.5px;background:#9CDCFE;border-radius:0px;opacity:.5"></div>
<div class="r" style="left:976.0px;top:121px;width:1.0px;height:1.5px;background:#D4D4D4;border-radius:0px;opacity:.5"></div>
<div class="r" style="left:977.0px;top:121px;width:1.0px;height:1.5px;background:#D4D4D4;border-radius:0px;opacity:.5"></div>
<div class="r" style="left:979.0px;top:121px;width:4.0px;height:1.5px;background:#B5CEA8;border-radius:0px;opacity:.5"></div>
<div class="r" style="left:983.0px;top:121px;width:1.0px;height:1.5px;background:#D4D4D4;border-radius:0px;opacity:.5"></div>
<div class="r" style="left:960.0px;top:123px;width:8.0px;height:1.5px;background:#4FC1FF;border-radius:0px;opacity:.5"></div>
<div class="r" style="left:968.0px;top:123px;width:1.0px;height:1.5px;background:#D4D4D4;border-radius:0px;opacity:.5"></div>
<div class="r" style="left:969.0px;top:123px;width:6.0px;height:1.5px;background:#DCDCAA;border-radius:0px;opacity:.5"></div>
<div class="r" style="left:975.0px;top:123px;width:1.0px;height:1.5px;background:#D4D4D4;border-radius:0px;opacity:.5"></div>
<div class="r" style="left:976.0px;top:123px;width:5.0px;height:1.5px;background:#9CDCFE;border-radius:0px;opacity:.5"></div>
<div class="r" style="left:981.0px;top:123px;width:1.0px;height:1.5px;background:#D4D4D4;border-radius:0px;opacity:.5"></div>
<div class="r" style="left:983.0px;top:123px;width:6.0px;height:1.5px;background:#9CDCFE;border-radius:0px;opacity:.5"></div>
<div class="r" style="left:989.0px;top:123px;width:1.0px;height:1.5px;background:#D4D4D4;border-radius:0px;opacity:.5"></div>
<div class="r" style="left:990.0px;top:123px;width:1.0px;height:1.5px;background:#D4D4D4;border-radius:0px;opacity:.5"></div>
<div class="r" style="left:957px;top:125px;width:1.0px;height:1.5px;background:#D4D4D4;border-radius:0px;opacity:.5"></div>
<div class="r" style="left:957px;top:127px;width:7.0px;height:1.5px;background:#DCDCAA;border-radius:0px;opacity:.5"></div>
<div class="r" style="left:964.0px;top:127px;width:1.0px;height:1.5px;background:#D4D4D4;border-radius:0px;opacity:.5"></div>
<div class="r" style="left:965.0px;top:127px;width:1.0px;height:1.5px;background:#D4D4D4;border-radius:0px;opacity:.5"></div>
<div class="r" style="left:966.0px;top:127px;width:1.0px;height:1.5px;background:#D4D4D4;border-radius:0px;opacity:.5"></div>
<div class="r" style="left:957px;top:131px;width:13.0px;height:1.5px;background:#6A9955;border-radius:0px;opacity:.5"></div>
<div class="r" style="left:957px;top:133px;width:6.0px;height:1.5px;background:#4FC1FF;border-radius:0px;opacity:.5"></div>
<div class="r" style="left:963.0px;top:133px;width:1.0px;height:1.5px;background:#D4D4D4;border-radius:0px;opacity:.5"></div>
<div class="r" style="left:964.0px;top:133px;width:16.0px;height:1.5px;background:#DCDCAA;border-radius:0px;opacity:.5"></div>
<div class="r" style="left:980.0px;top:133px;width:1.0px;height:1.5px;background:#D4D4D4;border-radius:0px;opacity:.5"></div>
<div class="r" style="left:981.0px;top:133px;width:8.0px;height:1.5px;background:#CE9178;border-radius:0px;opacity:.5"></div>
<div class="r" style="left:989.0px;top:133px;width:1.0px;height:1.5px;background:#D4D4D4;border-radius:0px;opacity:.5"></div>
<div class="r" style="left:991.0px;top:133px;width:1.0px;height:1.5px;background:#D4D4D4;border-radius:0px;opacity:.5"></div>
<div class="r" style="left:992.0px;top:133px;width:1.0px;height:1.5px;background:#D4D4D4;border-radius:0px;opacity:.5"></div>
<div class="r" style="left:994.0px;top:133px;width:1.0px;height:1.5px;background:#D4D4D4;border-radius:0px;opacity:.5"></div>
<div class="r" style="left:995.0px;top:133px;width:1.0px;height:1.5px;background:#D4D4D4;border-radius:0px;opacity:.5"></div>
<div class="r" style="left:997.0px;top:133px;width:1.0px;height:1.5px;background:#D4D4D4;border-radius:0px;opacity:.5"></div>
<div class="r" style="left:960.0px;top:135px;width:6.0px;height:1.5px;background:#9CDCFE;border-radius:0px;opacity:.5"></div>
<div class="r" style="left:966.0px;top:135px;width:1.0px;height:1.5px;background:#D4D4D4;border-radius:0px;opacity:.5"></div>
<div class="r" style="left:967.0px;top:135px;width:6.0px;height:1.5px;background:#9CDCFE;border-radius:0px;opacity:.5"></div>
<div class="r" style="left:974.0px;top:135px;width:1.0px;height:1.5px;background:#D4D4D4;border-radius:0px;opacity:.5"></div>
<div class="r" style="left:976.0px;top:135px;width:6.0px;height:1.5px;background:#9CDCFE;border-radius:0px;opacity:.5"></div>
<div class="r" style="left:982.0px;top:135px;width:1.0px;height:1.5px;background:#D4D4D4;border-radius:0px;opacity:.5"></div>
<div class="r" style="left:983.0px;top:135px;width:10.0px;height:1.5px;background:#9CDCFE;border-radius:0px;opacity:.5"></div>
<div class="r" style="left:994.0px;top:135px;width:1.0px;height:1.5px;background:#D4D4D4;border-radius:0px;opacity:.5"></div>
<div class="r" style="left:996.0px;top:135px;width:6.0px;height:1.5px;background:#9CDCFE;border-radius:0px;opacity:.5"></div>
<div class="r" style="left:1002.0px;top:135px;width:1.0px;height:1.5px;background:#D4D4D4;border-radius:0px;opacity:.5"></div>
<div class="r" style="left:1003.0px;top:135px;width:11.0px;height:1.5px;background:#9CDCFE;border-radius:0px;opacity:.5"></div>
<div class="r" style="left:1014.0px;top:135px;width:1.0px;height:1.5px;background:#D4D4D4;border-radius:0px;opacity:.5"></div>
<div class="r" style="left:960.0px;top:137px;width:6.0px;height:1.5px;background:#9CDCFE;border-radius:0px;opacity:.5"></div>
<div class="r" style="left:966.0px;top:137px;width:1.0px;height:1.5px;background:#D4D4D4;border-radius:0px;opacity:.5"></div>
<div class="r" style="left:967.0px;top:137px;width:22.0px;height:1.5px;background:#DCDCAA;border-radius:0px;opacity:.5"></div>
<div class="r" style="left:989.0px;top:137px;width:1.0px;height:1.5px;background:#D4D4D4;border-radius:0px;opacity:.5"></div>
<div class="r" style="left:990.0px;top:137px;width:1.0px;height:1.5px;background:#D4D4D4;border-radius:0px;opacity:.5"></div>
<div class="r" style="left:991.0px;top:137px;width:1.0px;height:1.5px;background:#D4D4D4;border-radius:0px;opacity:.5"></div>
<div class="r" style="left:960.0px;top:139px;width:8.0px;height:1.5px;background:#9CDCFE;border-radius:0px;opacity:.5"></div>
<div class="r" style="left:968.0px;top:139px;width:1.0px;height:1.5px;background:#D4D4D4;border-radius:0px;opacity:.5"></div>
<div class="r" style="left:969.0px;top:139px;width:7.0px;height:1.5px;background:#DCDCAA;border-radius:0px;opacity:.5"></div>
<div class="r" style="left:976.0px;top:139px;width:1.0px;height:1.5px;background:#D4D4D4;border-radius:0px;opacity:.5"></div>
<div class="r" style="left:977.0px;top:139px;width:6.0px;height:1.5px;background:#9CDCFE;border-radius:0px;opacity:.5"></div>
<div class="r" style="left:983.0px;top:139px;width:1.0px;height:1.5px;background:#D4D4D4;border-radius:0px;opacity:.5"></div>
<div class="r" style="left:984.0px;top:139px;width:10.0px;height:1.5px;background:#9CDCFE;border-radius:0px;opacity:.5"></div>
<div class="r" style="left:994.0px;top:139px;width:1.0px;height:1.5px;background:#D4D4D4;border-radius:0px;opacity:.5"></div>
<div class="r" style="left:996.0px;top:139px;width:6.0px;height:1.5px;background:#9CDCFE;border-radius:0px;opacity:.5"></div>
<div class="r" style="left:1002.0px;top:139px;width:1.0px;height:1.5px;background:#D4D4D4;border-radius:0px;opacity:.5"></div>
<div class="r" style="left:1003.0px;top:139px;width:11.0px;height:1.5px;background:#9CDCFE;border-radius:0px;opacity:.5"></div>
<div class="r" style="left:1014.0px;top:139px;width:1.0px;height:1.5px;background:#D4D4D4;border-radius:0px;opacity:.5"></div>
<div class="r" style="left:1015.0px;top:139px;width:1.0px;height:1.5px;background:#D4D4D4;border-radius:0px;opacity:.5"></div>
<div class="r" style="left:957px;top:141px;width:1.0px;height:1.5px;background:#D4D4D4;border-radius:0px;opacity:.5"></div>
<div class="r" style="left:958.0px;top:141px;width:1.0px;height:1.5px;background:#D4D4D4;border-radius:0px;opacity:.5"></div>
<div class="r" style="left:959.0px;top:141px;width:1.0px;height:1.5px;background:#D4D4D4;border-radius:0px;opacity:.5"></div>
<div class="r" style="left:1045px;top:63px;width:1px;height:610px;background:#2a2d31;border-radius:0px;"></div>
<div class="r" style="left:1045px;top:63px;width:14px;height:273px;background:#272a2f;border-radius:0px;"></div>
</div></div>
<div class="r" style="left:211px;top:712px;width:849px;height:214px;box-sizing:border-box;border:1px solid #2f3236;border-radius:4px;overflow:hidden">
<div class="r" style="left:-212px;top:-713px;width:1920px;height:955px">
<svg class="r" style="left:224px;top:720px;" width="13" height="11" viewBox="0 0 13 11" fill="none"><path d="M1.5 9.3V2.3a.8.8 0 0 1 .8-.8h3l1.3 1.3h4.1a.8.8 0 0 1 .8.8v5.7a.8.8 0 0 1-.8.8H2.3a.8.8 0 0 1-.8-.8z" stroke="#a9b6be" stroke-width="1.1"/></svg>
<div class="t " style="left:241.5px;top:715.85px;font-size:13.7px;line-height:18px;color:#9eacb5;font-weight:400;letter-spacing:0px;">src</div>
<svg class="r" style="left:264px;top:720px;" width="6" height="10" viewBox="0 0 6 10" fill="none"><path d="M1 1l4 4-4 4" stroke="#a9b6be" stroke-width="1.2"/></svg>
<svg class="r" style="left:277px;top:719px;" width="12" height="12" viewBox="0 0 12 12" fill="none"><path d="M1 0.8h10l-0.8 8.6L6 11.4 1.8 9.4z" stroke="#d9a80f" stroke-width="1.1" stroke-linejoin="round"/><path d="M4.6 2.6v3.6c0 .9-.5 1.3-1.3 1.3M9 3c-.4-.4-.9-.5-1.4-.5-.6 0-1.1.4-1.1.9 0 1.2 2.5.8 2.5 2.1 0 .6-.5 1-1.2 1-.5 0-1-.2-1.4-.6M3 9h6" stroke="#d9a80f" stroke-width="1"/></svg>
<div class="t " style="left:294px;top:715.85px;font-size:13.7px;line-height:18px;color:#9eacb5;font-weight:400;letter-spacing:0px;">scene.js</div>
<div class="r" style="left:212px;top:747px;width:737px;height:19px;background:#1a1d21;border-radius:0px;"></div>
<div class="r" style="left:276px;top:804px;width:1px;height:57px;background:#3a3d42;border-radius:0px;"></div>
<div class="t code" style="left:200px;width:50px;text-align:right;top:748.04px;font-size:13px;line-height:19px;color:#c6c6c6">1</div>
<div class="t code" style="left:276px;top:748.04px;font-size:13px;line-height:19px;letter-spacing:-0.12px;"><span style="color:#C586C0">import</span><span style="color:#D4D4D4"> </span><span style="color:#D4D4D4">*</span><span style="color:#D4D4D4"> </span><span style="color:#9CDCFE">as</span><span style="color:#D4D4D4"> </span><span style="color:#4EC9B0">THREE</span><span style="color:#D4D4D4"> </span><span style="color:#C586C0">from</span><span style="color:#D4D4D4"> </span><span style="color:#CE9178">&#x27;three&#x27;</span></div>
<div class="t code" style="left:200px;width:50px;text-align:right;top:767.04px;font-size:13px;line-height:19px;color:#8a9196">2</div>
<div class="t code" style="left:200px;width:50px;text-align:right;top:786.04px;font-size:13px;line-height:19px;color:#8a9196">3</div>
<div class="t code" style="left:276px;top:786.04px;font-size:13px;line-height:19px;letter-spacing:-0.12px;"><span style="color:#C586C0">export</span><span style="color:#D4D4D4"> </span><span style="color:#569CD6">function</span><span style="color:#D4D4D4"> </span><span style="color:#DCDCAA">createScene</span><span style="color:#FFD700">(</span><span style="color:#FFD700">)</span><span style="color:#D4D4D4"> </span><span style="color:#FFD700">{</span></div>
<div class="t code" style="left:200px;width:50px;text-align:right;top:805.04px;font-size:13px;line-height:19px;color:#8a9196">4</div>
<div class="t code" style="left:276px;top:805.04px;font-size:13px;line-height:19px;letter-spacing:-0.12px;"><span style="color:#D4D4D4"> </span><span style="color:#D4D4D4"> </span><span style="color:#D4D4D4"> </span><span style="color:#569CD6">const</span><span style="color:#D4D4D4"> </span><span style="color:#9CDCFE">scene</span><span style="color:#D4D4D4"> </span><span style="color:#D4D4D4">=</span><span style="color:#D4D4D4"> </span><span style="color:#569CD6">new</span><span style="color:#D4D4D4"> </span><span style="color:#4FC1FF">THREE</span><span style="color:#D4D4D4">.</span><span style="color:#DCDCAA">Scene</span><span style="color:#DA70D6">(</span><span style="color:#DA70D6">)</span><span style="color:#D4D4D4">;</span></div>
<div class="t code" style="left:200px;width:50px;text-align:right;top:824.04px;font-size:13px;line-height:19px;color:#8a9196">5</div>
<div class="t code" style="left:276px;top:824.04px;font-size:13px;line-height:19px;letter-spacing:-0.12px;"><span style="color:#D4D4D4"> </span><span style="color:#D4D4D4"> </span><span style="color:#D4D4D4"> </span><span style="color:#4FC1FF">scene</span><span style="color:#D4D4D4">.</span><span style="color:#9CDCFE">background</span><span style="color:#D4D4D4"> </span><span style="color:#D4D4D4">=</span><span style="color:#D4D4D4"> </span><span style="color:#569CD6">new</span><span style="color:#D4D4D4"> </span><span style="color:#4FC1FF">THREE</span><span style="color:#D4D4D4">.</span><span style="color:#DCDCAA">Color</span><span style="color:#DA70D6">(</span><span style="color:#CE9178">&#x27;<span style="display:inline-block;width:9px;height:9px;border:1px solid #d8d8d8;background:#151516;margin:0 4px 0 2px;vertical-align:-1px;letter-spacing:0"></span>#151516&#x27;</span><span style="color:#DA70D6">)</span><span style="color:#D4D4D4">;</span></div>
<div class="t code" style="left:200px;width:50px;text-align:right;top:843.04px;font-size:13px;line-height:19px;color:#8a9196">6</div>
<div class="t code" style="left:276px;top:843.04px;font-size:13px;line-height:19px;letter-spacing:-0.12px;"><span style="color:#D4D4D4"> </span><span style="color:#D4D4D4"> </span><span style="color:#D4D4D4"> </span><span style="color:#C586C0">return</span><span style="color:#D4D4D4"> </span><span style="color:#9CDCFE">scene</span><span style="color:#D4D4D4">;</span></div>
<div class="t code" style="left:200px;width:50px;text-align:right;top:862.04px;font-size:13px;line-height:19px;color:#8a9196">7</div>
<div class="t code" style="left:276px;top:862.04px;font-size:13px;line-height:19px;letter-spacing:-0.12px;"><span style="color:#FFD700">}</span></div>
<div class="r" style="left:957px;top:737px;width:6.0px;height:1.5px;background:#C586C0;border-radius:0px;opacity:.5"></div>
<div class="r" style="left:964.0px;top:737px;width:1.0px;height:1.5px;background:#D4D4D4;border-radius:0px;opacity:.5"></div>
<div class="r" style="left:966.0px;top:737px;width:2.0px;height:1.5px;background:#9CDCFE;border-radius:0px;opacity:.5"></div>
<div class="r" style="left:969.0px;top:737px;width:5.0px;height:1.5px;background:#4EC9B0;border-radius:0px;opacity:.5"></div>
<div class="r" style="left:975.0px;top:737px;width:4.0px;height:1.5px;background:#C586C0;border-radius:0px;opacity:.5"></div>
<div class="r" style="left:980.0px;top:737px;width:7.0px;height:1.5px;background:#CE9178;border-radius:0px;opacity:.5"></div>
<div class="r" style="left:957px;top:741px;width:6.0px;height:1.5px;background:#C586C0;border-radius:0px;opacity:.5"></div>
<div class="r" style="left:964.0px;top:741px;width:8.0px;height:1.5px;background:#569CD6;border-radius:0px;opacity:.5"></div>
<div class="r" style="left:973.0px;top:741px;width:11.0px;height:1.5px;background:#DCDCAA;border-radius:0px;opacity:.5"></div>
<div class="r" style="left:984.0px;top:741px;width:1.0px;height:1.5px;background:#D4D4D4;border-radius:0px;opacity:.5"></div>
<div class="r" style="left:985.0px;top:741px;width:1.0px;height:1.5px;background:#D4D4D4;border-radius:0px;opacity:.5"></div>
<div class="r" style="left:987.0px;top:741px;width:1.0px;height:1.5px;background:#D4D4D4;border-radius:0px;opacity:.5"></div>
<div class="r" style="left:960.0px;top:743px;width:5.0px;height:1.5px;background:#569CD6;border-radius:0px;opacity:.5"></div>
<div class="r" style="left:966.0px;top:743px;width:5.0px;height:1.5px;background:#9CDCFE;border-radius:0px;opacity:.5"></div>
<div class="r" style="left:972.0px;top:743px;width:1.0px;height:1.5px;background:#D4D4D4;border-radius:0px;opacity:.5"></div>
<div class="r" style="left:974.0px;top:743px;width:3.0px;height:1.5px;background:#569CD6;border-radius:0px;opacity:.5"></div>
<div class="r" style="left:978.0px;top:743px;width:5.0px;height:1.5px;background:#4FC1FF;border-radius:0px;opacity:.5"></div>
<div class="r" style="left:983.0px;top:743px;width:1.0px;height:1.5px;background:#D4D4D4;border-radius:0px;opacity:.5"></div>
<div class="r" style="left:984.0px;top:743px;width:5.0px;height:1.5px;background:#DCDCAA;border-radius:0px;opacity:.5"></div>
<div class="r" style="left:989.0px;top:743px;width:1.0px;height:1.5px;background:#D4D4D4;border-radius:0px;opacity:.5"></div>
<div class="r" style="left:990.0px;top:743px;width:1.0px;height:1.5px;background:#D4D4D4;border-radius:0px;opacity:.5"></div>
<div class="r" style="left:991.0px;top:743px;width:1.0px;height:1.5px;background:#D4D4D4;border-radius:0px;opacity:.5"></div>
<div class="r" style="left:960.0px;top:745px;width:5.0px;height:1.5px;background:#4FC1FF;border-radius:0px;opacity:.5"></div>
<div class="r" style="left:965.0px;top:745px;width:1.0px;height:1.5px;background:#D4D4D4;border-radius:0px;opacity:.5"></div>
<div class="r" style="left:966.0px;top:745px;width:10.0px;height:1.5px;background:#9CDCFE;border-radius:0px;opacity:.5"></div>
<div class="r" style="left:977.0px;top:745px;width:1.0px;height:1.5px;background:#D4D4D4;border-radius:0px;opacity:.5"></div>
<div class="r" style="left:979.0px;top:745px;width:3.0px;height:1.5px;background:#569CD6;border-radius:0px;opacity:.5"></div>
<div class="r" style="left:983.0px;top:745px;width:5.0px;height:1.5px;background:#4FC1FF;border-radius:0px;opacity:.5"></div>
<div class="r" style="left:988.0px;top:745px;width:1.0px;height:1.5px;background:#D4D4D4;border-radius:0px;opacity:.5"></div>
<div class="r" style="left:989.0px;top:745px;width:5.0px;height:1.5px;background:#DCDCAA;border-radius:0px;opacity:.5"></div>
<div class="r" style="left:994.0px;top:745px;width:1.0px;height:1.5px;background:#D4D4D4;border-radius:0px;opacity:.5"></div>
<div class="r" style="left:995.0px;top:745px;width:10.0px;height:1.5px;background:#CE9178;border-radius:0px;opacity:.5"></div>
<div class="r" style="left:1005.0px;top:745px;width:1.0px;height:1.5px;background:#D4D4D4;border-radius:0px;opacity:.5"></div>
<div class="r" style="left:1006.0px;top:745px;width:1.0px;height:1.5px;background:#D4D4D4;border-radius:0px;opacity:.5"></div>
<div class="r" style="left:960.0px;top:747px;width:6.0px;height:1.5px;background:#C586C0;border-radius:0px;opacity:.5"></div>
<div class="r" style="left:967.0px;top:747px;width:5.0px;height:1.5px;background:#9CDCFE;border-radius:0px;opacity:.5"></div>
<div class="r" style="left:972.0px;top:747px;width:1.0px;height:1.5px;background:#D4D4D4;border-radius:0px;opacity:.5"></div>
<div class="r" style="left:957px;top:749px;width:1.0px;height:1.5px;background:#D4D4D4;border-radius:0px;opacity:.5"></div>
<div class="r" style="left:1045px;top:737px;width:1px;height:188px;background:#2a2d31;border-radius:0px;"></div>
<div class="r" style="left:1045px;top:737px;width:14px;height:133px;background:#272a2f;border-radius:0px;"></div>
</div></div>
<svg class="r" style="left:220px;top:686px;" width="12" height="12" viewBox="0 0 12 12" fill="none"><path d="M1 0.8h10l-0.8 8.6L6 11.4 1.8 9.4z" stroke="#d9a80f" stroke-width="1.1" stroke-linejoin="round"/><path d="M4.6 2.6v3.6c0 .9-.5 1.3-1.3 1.3M9 3c-.4-.4-.9-.5-1.4-.5-.6 0-1.1.4-1.1.9 0 1.2 2.5.8 2.5 2.1 0 .6-.5 1-1.2 1-.5 0-1-.2-1.4-.6M3 9h6" stroke="#d9a80f" stroke-width="1"/></svg>
<div class="t " style="left:239px;top:683.85px;font-size:13.7px;line-height:18px;color:#9eacb5;font-weight:400;letter-spacing:0px;">renderer.js</div>
<div class="r" style="left:343px;top:679px;width:110px;height:26px;background:#1e2125;border-radius:6px;"></div>
<svg class="r" style="left:351px;top:686px;" width="12" height="12" viewBox="0 0 12 12" fill="none"><path d="M1 0.8h10l-0.8 8.6L6 11.4 1.8 9.4z" stroke="#d9a80f" stroke-width="1.1" stroke-linejoin="round"/><path d="M4.6 2.6v3.6c0 .9-.5 1.3-1.3 1.3M9 3c-.4-.4-.9-.5-1.4-.5-.6 0-1.1.4-1.1.9 0 1.2 2.5.8 2.5 2.1 0 .6-.5 1-1.2 1-.5 0-1-.2-1.4-.6M3 9h6" stroke="#d9a80f" stroke-width="1"/></svg>
<div class="t " style="left:371px;top:683.85px;font-size:13.7px;line-height:18px;color:#eef0f2;font-weight:400;letter-spacing:0px;">scene.js</div>
<div class="r" style="left:434px;top:688px;width:8px;height:8px;background:#c9d1d7;border-radius:4px;"></div>
<svg class="r" style="left:1048px;top:685px;" width="4" height="14" viewBox="0 0 4 14" fill="none"><circle cx="2" cy="3" r="1.3" fill="#a9b6be"/><circle cx="2" cy="7.1" r="1.3" fill="#a9b6be"/><circle cx="2" cy="11.2" r="1.3" fill="#a9b6be"/></svg>
<div class="r" style="left:1065px;top:37px;width:849px;height:704px;box-sizing:border-box;border:1px solid #2f3236;border-radius:4px;overflow:hidden;background:#151516">
<div class="r" style="left:0;top:0;width:847px;height:31px;background:#141517;border-bottom:1px solid #2f3236"></div>
</div>
<svg class="r" style="left:1078px;top:48px;" width="12" height="11" viewBox="0 0 12 11" fill="none"><path d="M11.5 5.5H1M5.5 1L1 5.5 5.5 10" stroke="#a9b6be" stroke-width="1.2"/></svg>
<svg class="r" style="left:1104px;top:48px;" width="12" height="11" viewBox="0 0 12 11" fill="none"><path d="M0.5 5.5H11M6.5 1L11 5.5 6.5 10" stroke="#a9b6be" stroke-width="1.2"/></svg>
<svg class="r" style="left:1131px;top:47px;" width="11" height="13" viewBox="0 0 11 13" fill="none"><path d="M0 0L11 6.5 0 13z" fill="#0078d4"/></svg>
<div class="r" style="left:1156px;top:48px;width:11px;height:11px;background:#9aabb5;border-radius:2px;"></div>
<div class="t " style="left:1181px;top:45.83px;font-size:13.2px;line-height:17px;color:#c8d0d8;font-weight:400;letter-spacing:0px;">/index.html</div>
<svg class="r" style="left:1808px;top:48px;" width="11" height="11" viewBox="0 0 11 11" fill="none"><path d="M0.7 0.7L10.3 10.3M10.3 0.7L0.7 10.3" stroke="#a9b6be" stroke-width="1.4"/></svg>
<svg class="r" style="left:1836px;top:46px;" width="14" height="14" viewBox="0 0 14 14" fill="none"><path d="M3 10.5a5.5 5.5 0 1 1 8 0" stroke="#a9b6be" stroke-width="1.3"/><path d="M4.8 8.5a2.9 2.9 0 1 1 4.4 0" stroke="#a9b6be" stroke-width="1.3"/><path d="M7 6.8L4.8 13.5M7 6.8l2.2 6.7M5.5 11.5h3" stroke="#a9b6be" stroke-width="1.2"/></svg>
<svg class="r" style="left:1862px;top:46px;" width="15" height="14" viewBox="0 0 15 14" fill="none"><rect x="3.6" y="0.6" width="10.6" height="9.6" rx="1.6" stroke="#a9b6be" stroke-width="1.2"/><path d="M0.8 3.5v8a1.6 1.6 0 0 0 1.6 1.6h8.5" stroke="#a9b6be" stroke-width="1.2"/><path d="M4.5 9l3-3 2.5 2.5 1.5-1.5L14 9.5" stroke="#a9b6be" stroke-width="1.1"/><circle cx="11" cy="3.6" r="1" fill="#a9b6be"/></svg>
<svg class="r" style="left:1889px;top:46px;" width="12" height="14" viewBox="0 0 12 14" fill="none"><path d="M1 1.8a1 1 0 0 1 1-1h5.3l3.7 3.7v7.7a1 1 0 0 1-1 1H2a1 1 0 0 1-1-1z" stroke="#a9b6be" stroke-width="1.2"/><path d="M6 5.5v5.5M3.3 8.3h5.4" stroke="#a9b6be" stroke-width="1.5"/></svg>
<svg class="r" style="left:1400px;top:310px;" width="180" height="180" viewBox="0 0 180 180" fill="none">
<polygon points="103,20.4 31.2,51.8 24.3,126.5 104,98.9" fill="#575d6b"/>
<polygon points="103,20.4 145.3,67 151.5,139 104,98.9" fill="#7f8884"/>
<polygon points="24.3,126.5 104,98.9 151.5,139 77.9,159.6" fill="#1e2351"/>
</svg>
<div class="r" style="left:1065px;top:746px;width:114px;height:26px;background:#1e2125;border-radius:6px;"></div>
<svg class="r" style="left:1073px;top:754px;" width="12" height="11" viewBox="0 0 12 11" fill="none"><path d="M1 1l4 4-4 4" stroke="#ecb210" stroke-width="1.3"/><path d="M6 10h5.5" stroke="#ecb210" stroke-width="1.3"/></svg>
<div class="t " style="left:1093.5px;top:750.85px;font-size:13.7px;line-height:18px;color:#eef0f2;font-weight:400;letter-spacing:0px;">Devtools</div>
<svg class="r" style="left:1161px;top:756px;" width="8" height="8" viewBox="0 0 8 8" fill="none"><path d="M0.7 0.7L7.3 7.3M7.3 0.7L0.7 7.3" stroke="#9eacb5" stroke-width="1.1"/></svg>
<svg class="r" style="left:1902px;top:752px;" width="4" height="14" viewBox="0 0 4 14" fill="none"><circle cx="2" cy="3" r="1.3" fill="#a9b6be"/><circle cx="2" cy="7.1" r="1.3" fill="#a9b6be"/><circle cx="2" cy="11.2" r="1.3" fill="#a9b6be"/></svg>
<div class="r" style="left:1065px;top:778px;width:849px;height:148px;box-sizing:border-box;border:1px solid #2f3236;border-radius:4px;overflow:hidden">
<div class="r" style="left:0;top:0;width:847px;height:32px;border-bottom:1px solid #2f3236"></div>
</div>
<svg class="r" style="left:1076px;top:788px;" width="12" height="13" viewBox="0 0 12 13" fill="none"><rect x="0.6" y="0.6" width="4" height="4.5" rx="1.5" stroke="#a9b6be" stroke-width="1.2"/><rect x="0.6" y="6.8" width="4" height="5.5" rx="1.5" stroke="#a9b6be" stroke-width="1.2"/><rect x="7" y="0.6" width="4" height="11.7" rx="2" stroke="#a9b6be" stroke-width="1.2"/></svg>
<div class="t " style="left:1095.5px;top:787.05px;font-size:13.7px;line-height:18px;color:#9eacb5;font-weight:400;letter-spacing:0px;">Inspector</div>
<svg class="r" style="left:1174px;top:789px;" width="12" height="11" viewBox="0 0 12 11" fill="none"><path d="M1 1l4 4-4 4" stroke="#a9b6be" stroke-width="1.3"/><path d="M6 10h5.5" stroke="#a9b6be" stroke-width="1.3"/></svg>
<div class="t " style="left:1193.5px;top:787.05px;font-size:13.7px;line-height:18px;color:#9eacb5;font-weight:400;letter-spacing:0px;">Console</div>
<svg class="r" style="left:1263px;top:789px;" width="13" height="10" viewBox="0 0 13 10" fill="none"><path d="M1 3.5a8 8 0 0 1 11 0M2.8 5.5a5.2 5.2 0 0 1 7.4 0M4.6 7.4a2.6 2.6 0 0 1 3.8 0" stroke="#a9b6be" stroke-width="1.2"/><circle cx="6.5" cy="9" r=".9" fill="#a9b6be"/></svg>
<div class="t " style="left:1283.5px;top:787.05px;font-size:13.7px;line-height:18px;color:#9eacb5;font-weight:400;letter-spacing:0px;">Network</div>
<svg class="r" style="left:1356px;top:788px;" width="13" height="13" viewBox="0 0 13 13" fill="none"><ellipse cx="6.5" cy="7.5" rx="3.2" ry="4.3" stroke="#c9d1d7" stroke-width="1.2"/><path d="M6.5 3.5v8M1 4.5l2.5 1.5M12 4.5L9.5 6M1 8h2.3M12 8H9.7M1.5 12l2.3-1.5M11.5 12l-2.3-1.5M4.5 1.5l1 1.5M8.5 1.5l-1 1.5" stroke="#c9d1d7" stroke-width="1.1"/></svg>
<div class="t " style="left:1376.5px;top:787.05px;font-size:13.7px;line-height:18px;color:#e6eaee;font-weight:400;letter-spacing:0px;">Sources</div>
<div class="r" style="left:1347px;top:809px;width:89px;height:2px;background:#1f8ceb;border-radius:0px;"></div>
<div class="r" style="left:1443px;top:779px;width:1px;height:32px;background:#2f3236;border-radius:0px;"></div>
<div class="t " style="left:1455.5px;top:788.70px;font-size:12.4px;line-height:16px;color:#727d85;font-weight:400;letter-spacing:-0.1px;">Filter sources...</div>
<svg class="r" style="left:1078px;top:817.5px;" width="7" height="11" viewBox="0 0 7 11" fill="none"><path d="M1.2 1l4.2 4.5-4.2 4.5" stroke="#a9b6be" stroke-width="1.2"/></svg>
<svg class="r" style="left:1095px;top:816.5px;" width="13" height="13" viewBox="0 0 13 13" fill="none"><circle cx="6.5" cy="6.5" r="5.7" stroke="#a9b6be" stroke-width="1.1"/><ellipse cx="6.5" cy="6.5" rx="2.5" ry="5.7" stroke="#a9b6be" stroke-width="1"/><path d="M1 4.8h11M1 8.2h11" stroke="#a9b6be" stroke-width="1"/></svg>
<div class="t " style="left:1112.5px;top:815.80px;font-size:12.4px;line-height:16px;color:#c9d1d7;font-weight:400;letter-spacing:-0.15px;">esm.sh</div>
<svg class="r" style="left:1078px;top:842.0px;" width="7" height="11" viewBox="0 0 7 11" fill="none"><path d="M1.2 1l4.2 4.5-4.2 4.5" stroke="#a9b6be" stroke-width="1.2"/></svg>
<svg class="r" style="left:1095px;top:841.0px;" width="13" height="13" viewBox="0 0 13 13" fill="none"><circle cx="6.5" cy="6.5" r="5.7" stroke="#a9b6be" stroke-width="1.1"/><ellipse cx="6.5" cy="6.5" rx="2.5" ry="5.7" stroke="#a9b6be" stroke-width="1"/><path d="M1 4.8h11M1 8.2h11" stroke="#a9b6be" stroke-width="1"/></svg>
<div class="t " style="left:1112.5px;top:840.30px;font-size:12.4px;line-height:16px;color:#c9d1d7;font-weight:400;letter-spacing:-0.15px;">Virtual-File-System</div>
<svg class="r" style="left:1078px;top:866.5px;" width="7" height="11" viewBox="0 0 7 11" fill="none"><path d="M1.2 1l4.2 4.5-4.2 4.5" stroke="#a9b6be" stroke-width="1.2"/></svg>
<svg class="r" style="left:1095px;top:865.5px;" width="13" height="13" viewBox="0 0 13 13" fill="none"><circle cx="6.5" cy="6.5" r="5.7" stroke="#a9b6be" stroke-width="1.1"/><ellipse cx="6.5" cy="6.5" rx="2.5" ry="5.7" stroke="#a9b6be" stroke-width="1"/><path d="M1 4.8h11M1 8.2h11" stroke="#a9b6be" stroke-width="1"/></svg>
<div class="t " style="left:1112.5px;top:864.80px;font-size:12.4px;line-height:16px;color:#c9d1d7;font-weight:400;letter-spacing:-0.15px;">preview.codevre.com</div>
<div class="r" style="left:1905px;top:820px;width:8px;height:105px;background:#25282d;border-radius:0px;"></div>
<svg class="r" style="left:1905px;top:812px;" width="8" height="8" viewBox="0 0 8 8" fill="none"><path d="M2 5.5l2-2 2 2" stroke="#d0d4d8" stroke-width="1.3"/></svg>
</body></html>
